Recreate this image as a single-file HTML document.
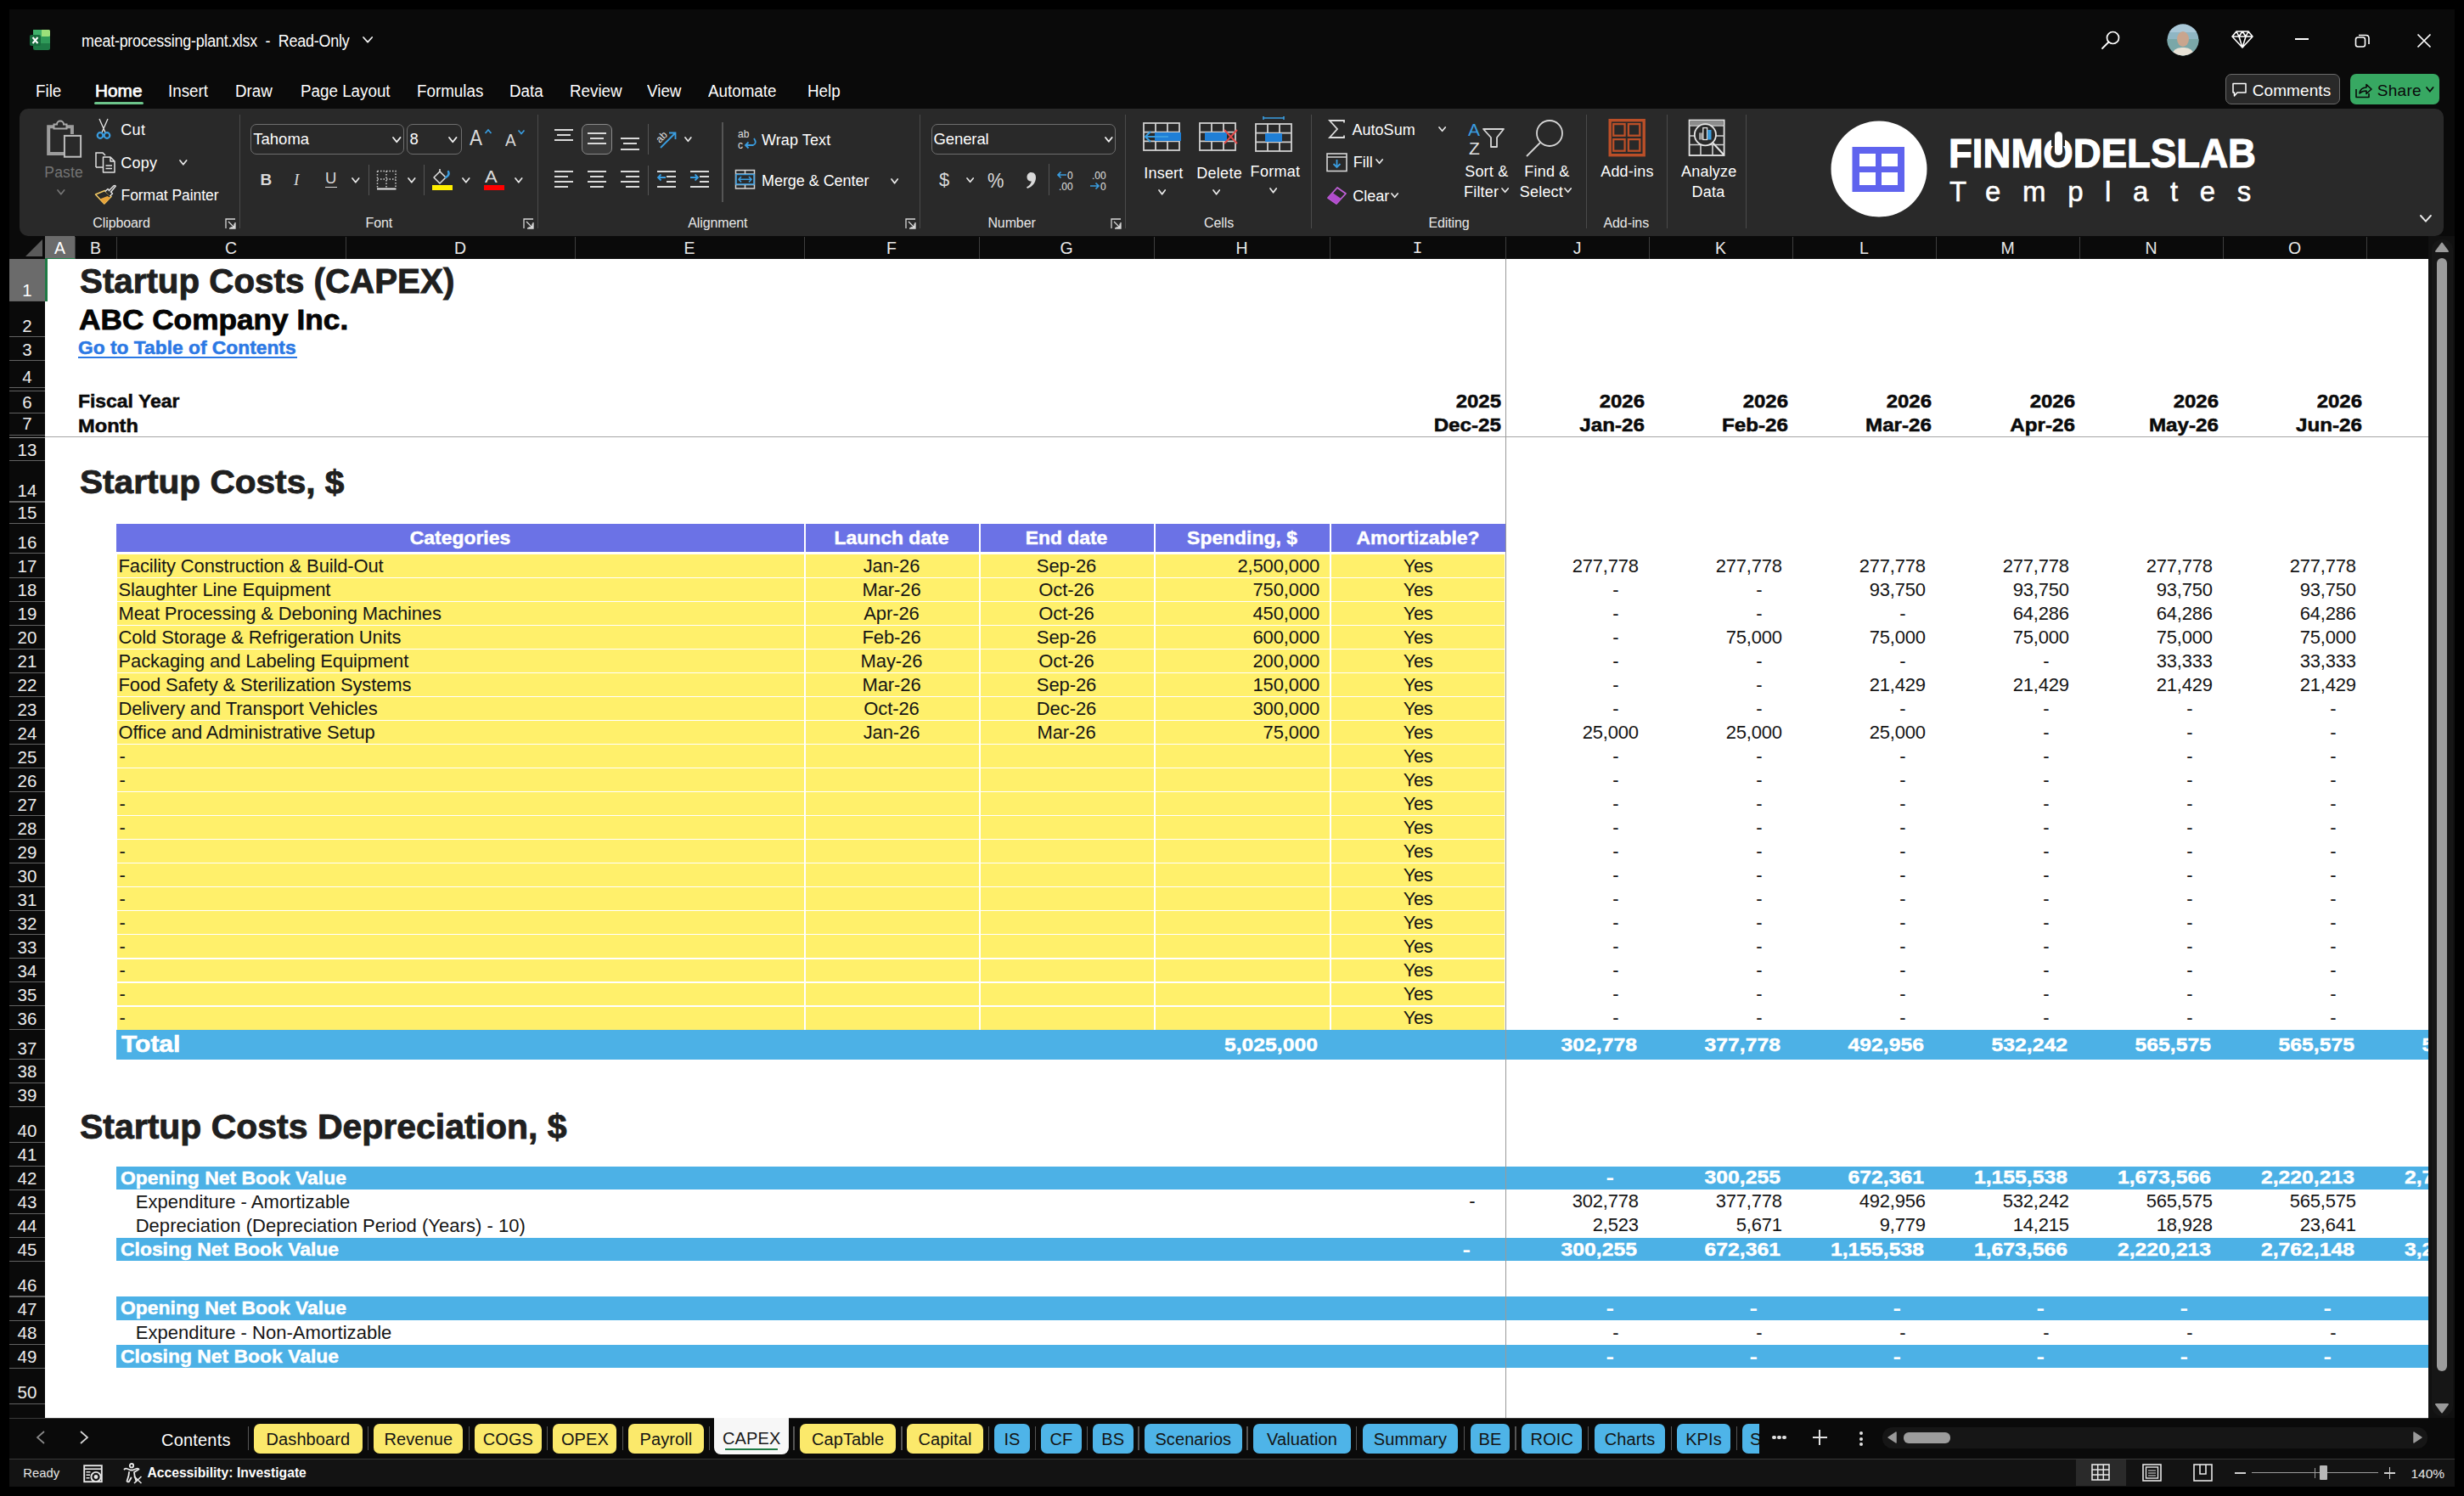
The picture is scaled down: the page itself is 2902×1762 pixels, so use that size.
<!DOCTYPE html>
<html><head><meta charset="utf-8"><style>
html,body{margin:0;padding:0}
body{width:2902px;height:1762px;background:#000;position:relative;overflow:hidden;font-family:"Liberation Sans", sans-serif}
.t{position:absolute;white-space:pre;line-height:1;font-family:"Liberation Sans", sans-serif}
.r{position:absolute}
</style></head><body>
<div class="r" style="left:11.0px;top:11.0px;width:2880.0px;height:1740.0px;background:#0a0a0a;"></div>
<svg class="r" style="left:34.0px;top:34.0px" width="26" height="26" viewBox="0 0 26 26" fill="none">
<rect x="5" y="1" width="20" height="24" rx="2.5" fill="#1e7a45"/>
<rect x="14" y="1" width="11" height="8" rx="1.5" fill="#9be07a"/>
<rect x="5" y="1" width="10" height="8" fill="#3fb06a"/>
<rect x="14" y="9" width="11" height="8" fill="#2f9a58"/>
<rect x="1" y="7" width="13" height="13" rx="2" fill="#176b3c"/>
<path d="M4.5 10 L10.5 17 M10.5 10 L4.5 17" stroke="#fff" stroke-width="2"/>
</svg>
<div class="t" style="top:37.6px;font-size:20px;color:#ffffff;letter-spacing:-0.25px;left:95.5px;transform:scaleX(0.895);transform-origin:left top;">meat-processing-plant.xlsx  -  Read-Only</div>
<svg class="r" style="left:425.9px;top:42.1px" width="14.2" height="9.7" viewBox="0 0 14.2 9.7" fill="none"><path d="M2 2 L7.1 7.699999999999999 L12.2 2" stroke="#f0f0f0" stroke-width="1.7600000000000002" stroke-linecap="round" stroke-linejoin="round"/></svg>
<svg class="r" style="left:2474.0px;top:35.0px" width="24" height="24" viewBox="0 0 24 24" fill="none"><circle cx="14.5" cy="9.5" r="7" stroke="#fff" stroke-width="1.7"/><path d="M9.5 14.5 L2 22" stroke="#fff" stroke-width="1.8" stroke-linecap="round"/></svg>
<svg class="r" style="left:2552.0px;top:28.0px" width="38" height="38" viewBox="0 0 38 38" fill="none">
<defs><clipPath id="av"><circle cx="19" cy="19" r="18.5"/></clipPath></defs>
<g clip-path="url(#av)">
<rect width="38" height="38" fill="#8fb6c4"/>
<rect y="0" width="38" height="10" fill="#aac8d8"/>
<rect y="18" width="38" height="20" fill="#7aa7a8"/>
<ellipse cx="19" cy="18" rx="7" ry="9" fill="#c9a58e"/>
<path d="M5 38 Q8 27 19 28 Q30 27 33 38 Z" fill="#e8e2d6"/>
</g></svg>
<svg class="r" style="left:2627.0px;top:33.0px" width="28" height="26" viewBox="0 0 28 26" fill="none"><path d="M7 4 H21 L26 10 L14 23 L2 10 Z M2 10 H26 M10 10 L14 23 L18 10 M7 4 L10 10 L14 4 L18 10 L21 4" stroke="#fff" stroke-width="1.6" stroke-linejoin="round"/></svg>
<div class="r" style="left:2703.0px;top:45.0px;width:16.0px;height:2.0px;background:#ffffff;"></div>
<svg class="r" style="left:2773.0px;top:39.0px" width="20" height="18" viewBox="0 0 20 18" fill="none"><rect x="1.5" y="5" width="11" height="11" rx="2.5" stroke="#fff" stroke-width="1.6"/><path d="M5 2.5 H13.5 Q17 2.5 17 6 V13" stroke="#fff" stroke-width="1.6"/></svg>
<svg class="r" style="left:2846.0px;top:39.0px" width="18" height="18" viewBox="0 0 18 18" fill="none"><path d="M1.5 1.5 L16.5 16.5 M16.5 1.5 L1.5 16.5" stroke="#fff" stroke-width="1.7"/></svg>
<div class="t" style="top:96.7px;font-size:20px;color:#ffffff;left:42.2px;transform:scaleX(0.94);transform-origin:left top;">File</div>
<div class="t" style="top:96.7px;font-size:20px;color:#ffffff;left:197.8px;transform:scaleX(0.94);transform-origin:left top;">Insert</div>
<div class="t" style="top:96.7px;font-size:20px;color:#ffffff;left:277.0px;transform:scaleX(0.94);transform-origin:left top;">Draw</div>
<div class="t" style="top:96.7px;font-size:20px;color:#ffffff;left:353.5px;transform:scaleX(0.94);transform-origin:left top;">Page Layout</div>
<div class="t" style="top:96.7px;font-size:20px;color:#ffffff;left:491.0px;transform:scaleX(0.94);transform-origin:left top;">Formulas</div>
<div class="t" style="top:96.7px;font-size:20px;color:#ffffff;left:600.0px;transform:scaleX(0.94);transform-origin:left top;">Data</div>
<div class="t" style="top:96.7px;font-size:20px;color:#ffffff;left:670.5px;transform:scaleX(0.94);transform-origin:left top;">Review</div>
<div class="t" style="top:96.7px;font-size:20px;color:#ffffff;left:761.8px;transform:scaleX(0.94);transform-origin:left top;">View</div>
<div class="t" style="top:96.7px;font-size:20px;color:#ffffff;left:834.0px;transform:scaleX(0.94);transform-origin:left top;">Automate</div>
<div class="t" style="top:96.7px;font-size:20px;color:#ffffff;left:951.0px;transform:scaleX(0.94);transform-origin:left top;">Help</div>
<div class="t" style="top:96.7px;font-size:20px;color:#ffffff;left:111.6px;transform:scaleX(1.04);transform-origin:left top;-webkit-text-stroke:0.7px #fff;">Home</div>
<div class="r" style="left:111.0px;top:120.0px;width:58.0px;height:3.0px;background:#6cc48a;border-radius:2px"></div>
<div class="r" style="left:2621.0px;top:87.0px;width:135.0px;height:36.0px;background:#292929;border:1.3px solid #6a6a6a;border-radius:7px;box-sizing:border-box"></div>
<svg class="r" style="left:2628.0px;top:96.0px" width="20" height="20" viewBox="0 0 20 20" fill="none"><path d="M2 2.5 H17 V13 H7 L3.5 17 V13 H2 Z" stroke="#fff" stroke-width="1.5" stroke-linejoin="round"/></svg>
<div class="t" style="top:96.6px;font-size:19px;color:#ffffff;letter-spacing:0.1px;left:2652.7px;">Comments</div>
<div class="r" style="left:2768.0px;top:87.0px;width:105.0px;height:36.0px;background:#37a862;border-radius:7px"></div>
<svg class="r" style="left:2773.0px;top:97.0px" width="22" height="20" viewBox="0 0 22 20" fill="none"><path d="M2 8 V17.5 H17 V13" stroke="#0b0b0b" stroke-width="1.6" stroke-linejoin="round"/><path d="M6 13 Q7 6 14 6 V2.5 L20 8 L14 13.5 V10 Q9 10 6 13 Z" stroke="#0b0b0b" stroke-width="1.6" stroke-linejoin="round"/></svg>
<div class="t" style="top:96.6px;font-size:19px;color:#0a0a0a;letter-spacing:0.3px;left:2799.7px;">Share</div>
<svg class="r" style="left:2856.2px;top:100.6px" width="11.649999999999999" height="8.75" viewBox="0 0 11.649999999999999 8.75" fill="none"><path d="M2 2 L5.824999999999999 6.75 L9.649999999999999 2" stroke="#0a0a0a" stroke-width="1.7600000000000002" stroke-linecap="round" stroke-linejoin="round"/></svg>
<div class="r" style="left:23.0px;top:128.0px;width:2855.0px;height:150.0px;background:#292929;border-radius:10px"></div>
<div class="r" style="left:281.9px;top:135.0px;width:1.2px;height:134.0px;background:#4a4a4a;"></div>
<div class="r" style="left:632.9px;top:135.0px;width:1.2px;height:134.0px;background:#4a4a4a;"></div>
<div class="r" style="left:1082.9px;top:135.0px;width:1.2px;height:134.0px;background:#4a4a4a;"></div>
<div class="r" style="left:1324.9px;top:135.0px;width:1.2px;height:134.0px;background:#4a4a4a;"></div>
<div class="r" style="left:1543.9px;top:135.0px;width:1.2px;height:134.0px;background:#4a4a4a;"></div>
<div class="r" style="left:1867.7px;top:135.0px;width:1.2px;height:134.0px;background:#4a4a4a;"></div>
<div class="r" style="left:1962.8px;top:135.0px;width:1.2px;height:134.0px;background:#4a4a4a;"></div>
<div class="r" style="left:2055.9px;top:135.0px;width:1.2px;height:134.0px;background:#4a4a4a;"></div>
<div class="t" style="top:254.5px;font-size:16px;color:#e8e8e8;letter-spacing:-0.1px;left:109.3px;">Clipboard</div>
<div class="t" style="top:254.5px;font-size:16px;color:#e8e8e8;letter-spacing:-0.1px;left:430.5px;">Font</div>
<div class="t" style="top:254.5px;font-size:16px;color:#e8e8e8;letter-spacing:-0.1px;left:810.2px;">Alignment</div>
<div class="t" style="top:254.5px;font-size:16px;color:#e8e8e8;letter-spacing:-0.1px;left:1163.4px;">Number</div>
<div class="t" style="top:254.5px;font-size:16px;color:#e8e8e8;letter-spacing:-0.1px;left:1418.0px;">Cells</div>
<div class="t" style="top:254.5px;font-size:16px;color:#e8e8e8;letter-spacing:-0.1px;left:1682.4px;">Editing</div>
<div class="t" style="top:254.5px;font-size:16px;color:#e8e8e8;letter-spacing:-0.1px;left:1888.5px;">Add-ins</div>
<svg class="r" style="left:265.0px;top:257.0px" width="13" height="13" viewBox="0 0 13 13" fill="none"><path d="M1 12 V1 H12 M12 5 V12 H5 M4 4 L11 11 M11 6.5 V11 H6.5" stroke="#d8d8d8" stroke-width="1.3"/></svg>
<svg class="r" style="left:616.0px;top:257.0px" width="13" height="13" viewBox="0 0 13 13" fill="none"><path d="M1 12 V1 H12 M12 5 V12 H5 M4 4 L11 11 M11 6.5 V11 H6.5" stroke="#d8d8d8" stroke-width="1.3"/></svg>
<svg class="r" style="left:1066.0px;top:257.0px" width="13" height="13" viewBox="0 0 13 13" fill="none"><path d="M1 12 V1 H12 M12 5 V12 H5 M4 4 L11 11 M11 6.5 V11 H6.5" stroke="#d8d8d8" stroke-width="1.3"/></svg>
<svg class="r" style="left:1308.0px;top:257.0px" width="13" height="13" viewBox="0 0 13 13" fill="none"><path d="M1 12 V1 H12 M12 5 V12 H5 M4 4 L11 11 M11 6.5 V11 H6.5" stroke="#d8d8d8" stroke-width="1.3"/></svg>
<svg class="r" style="left:54.0px;top:140.0px" width="44" height="48" viewBox="0 0 44 48" fill="none">
<path d="M21 40.9 H3.2 V9.2 H9.5 M24.5 9.2 H30.9 V18" stroke="#9c9c9c" stroke-width="4"/>
<path d="M9.5 11.5 V6.5 H13 A4 4 0 0 1 21 6.5 H24.5 V11.5 Z" stroke="#a8a8a8" stroke-width="2" fill="#292929"/>
<rect x="21.9" y="19.9" width="19.2" height="24.8" stroke="#bdbdbd" stroke-width="2"/></svg>
<div class="t" style="top:195.2px;font-size:17.5px;color:#747474;letter-spacing:0.2px;left:52.3px;">Paste</div>
<svg class="r" style="left:65.7px;top:222.1px" width="11.649999999999999" height="8.75" viewBox="0 0 11.649999999999999 8.75" fill="none"><path d="M2 2 L5.824999999999999 6.75 L9.649999999999999 2" stroke="#747474" stroke-width="1.7600000000000002" stroke-linecap="round" stroke-linejoin="round"/></svg>
<svg class="r" style="left:110.0px;top:139.0px" width="24" height="26" viewBox="0 0 24 26" fill="none">
<path d="M7 1 L14 17 M17 1 L10 17" stroke="#e6e6e6" stroke-width="1.3"/>
<circle cx="8" cy="20.5" r="3.3" stroke="#3a9de0" stroke-width="2.2"/>
<circle cx="16" cy="20.5" r="3.3" stroke="#3a9de0" stroke-width="2.2"/></svg>
<div class="t" style="top:143.8px;font-size:18px;color:#ffffff;letter-spacing:0.4px;left:142.2px;">Cut</div>
<svg class="r" style="left:111.0px;top:178.0px" width="26" height="27" viewBox="0 0 26 27" fill="none">
<path d="M2 19 V2 H10 L13 5" stroke="#e0e0e0" stroke-width="1.5"/>
<path d="M2 19 H10" stroke="#e0e0e0" stroke-width="1.5"/>
<path d="M10.5 7 H19 L24 12 V25 H10.5 Z M19 7 V12 H24" stroke="#e0e0e0" stroke-width="1.5" stroke-linejoin="round"/>
<path d="M13.5 17 H21 M13.5 20.5 H21" stroke="#e0e0e0" stroke-width="1.4"/></svg>
<div class="t" style="top:182.8px;font-size:18px;color:#ffffff;letter-spacing:0.3px;left:142.2px;">Copy</div>
<svg class="r" style="left:209.7px;top:187.1px" width="11.649999999999999" height="8.75" viewBox="0 0 11.649999999999999 8.75" fill="none"><path d="M2 2 L5.824999999999999 6.75 L9.649999999999999 2" stroke="#e6e6e6" stroke-width="1.7600000000000002" stroke-linecap="round" stroke-linejoin="round"/></svg>
<svg class="r" style="left:111.0px;top:216.0px" width="26" height="26" viewBox="0 0 26 26" fill="none">
<path d="M1.5 13 L12.4 8.6 L20 15.5 L11.8 24 Z" fill="#292929" stroke="#f2c863" stroke-width="1.6" stroke-linejoin="round"/>
<path d="M6.5 18.5 L15.5 15 L19 17 L11.8 24 Z" fill="#e8a33a"/>
<path d="M12.8 9.5 L16 6.5 L21.5 12 L18.5 15" stroke="#e0e0e0" stroke-width="1.5" fill="#292929" stroke-linejoin="round"/>
<path d="M17 9 L23 2.8 Q24.5 1.8 25.2 3.2 L19.3 10.5" stroke="#e0e0e0" stroke-width="1.5" fill="#292929" stroke-linejoin="round"/></svg>
<div class="t" style="top:222.0px;font-size:17.5px;color:#ffffff;letter-spacing:-0.05px;left:142.5px;">Format Painter</div>
<div class="r" style="left:295.0px;top:146.0px;width:181.0px;height:36.0px;background:transparent;border:1.3px solid #6f6f6f;border-radius:7px;box-sizing:border-box"></div>
<div class="t" style="top:155.3px;font-size:18.5px;color:#ffffff;left:298.3px;">Tahoma</div>
<svg class="r" style="left:460.8px;top:159.9px" width="12.5" height="9.225" viewBox="0 0 12.5 9.225" fill="none"><path d="M2 2 L6.25 7.225 L10.5 2" stroke="#f0f0f0" stroke-width="1.87" stroke-linecap="round" stroke-linejoin="round"/></svg>
<div class="r" style="left:479.0px;top:146.0px;width:65.0px;height:36.0px;background:transparent;border:1.3px solid #6f6f6f;border-radius:7px;box-sizing:border-box"></div>
<div class="t" style="top:155.3px;font-size:18.5px;color:#ffffff;left:482.4px;">8</div>
<svg class="r" style="left:526.8px;top:159.9px" width="12.5" height="9.225" viewBox="0 0 12.5 9.225" fill="none"><path d="M2 2 L6.25 7.225 L10.5 2" stroke="#f0f0f0" stroke-width="1.87" stroke-linecap="round" stroke-linejoin="round"/></svg>
<div class="t" style="top:150.3px;font-size:25px;color:#d9d9d9;left:553.0px;transform:scaleX(0.9);transform-origin:left top;">A</div>
<svg class="r" style="left:570.0px;top:151.0px" width="10" height="7" viewBox="0 0 10 7" fill="none"><path d="M1.5 6 L5 2 L8.5 6" stroke="#3a9de0" stroke-width="1.7"/></svg>
<div class="t" style="top:154.6px;font-size:20px;color:#d9d9d9;left:595.0px;transform:scaleX(0.95);transform-origin:left top;">A</div>
<svg class="r" style="left:609.0px;top:152.0px" width="10" height="7" viewBox="0 0 10 7" fill="none"><path d="M1.5 1.5 L5 5.5 L8.5 1.5" stroke="#3a9de0" stroke-width="1.7"/></svg>
<div class="t" style="top:201.9px;font-size:19px;color:#d9d9d9;font-weight:700;left:306.5px;">B</div>
<div class="t" style="top:201.9px;font-size:19px;color:#d9d9d9;left:346.0px;font-style:italic;font-family:'Liberation Serif',serif;">I</div>
<div class="t" style="top:201.3px;font-size:18.5px;color:#d9d9d9;left:383.0px;">U</div>
<div class="r" style="left:383.0px;top:219.5px;width:14.0px;height:1.5px;background:#d9d9d9;"></div>
<svg class="r" style="left:413.2px;top:207.6px" width="11.649999999999999" height="8.75" viewBox="0 0 11.649999999999999 8.75" fill="none"><path d="M2 2 L5.824999999999999 6.75 L9.649999999999999 2" stroke="#e6e6e6" stroke-width="1.7600000000000002" stroke-linecap="round" stroke-linejoin="round"/></svg>
<div class="r" style="left:433.8px;top:194.0px;width:1.2px;height:35.5px;background:#555;"></div>
<svg class="r" style="left:442.0px;top:199.0px" width="27" height="26" viewBox="0 0 27 26" fill="none"><path d="M2.5 2.5 H24 V22 M2.5 2.5 V22 M13 2.5 V22 M2.5 12 H24" stroke="#cfcfcf" stroke-width="1.5" stroke-dasharray="1.5 2"/><path d="M2 23.5 H24.5" stroke="#e6e6e6" stroke-width="2"/></svg>
<svg class="r" style="left:478.7px;top:207.6px" width="11.649999999999999" height="8.75" viewBox="0 0 11.649999999999999 8.75" fill="none"><path d="M2 2 L5.824999999999999 6.75 L9.649999999999999 2" stroke="#e6e6e6" stroke-width="1.7600000000000002" stroke-linecap="round" stroke-linejoin="round"/></svg>
<div class="r" style="left:499.0px;top:194.0px;width:1.2px;height:35.5px;background:#555;"></div>
<svg class="r" style="left:507.0px;top:198.0px" width="28" height="20" viewBox="0 0 28 20" fill="none"><path d="M4 11 L11 4 L18 11 L11 18 Z" stroke="#e0e0e0" stroke-width="1.5" stroke-linejoin="round"/><path d="M11 4 V1" stroke="#e0e0e0" stroke-width="1.5"/><path d="M18 11 Q23 8 21 4" stroke="#3a9de0" stroke-width="2.5" stroke-linecap="round"/></svg>
<div class="r" style="left:508.7px;top:217.8px;width:24.8px;height:6.2px;background:#ffef00;"></div>
<svg class="r" style="left:543.2px;top:207.6px" width="11.649999999999999" height="8.75" viewBox="0 0 11.649999999999999 8.75" fill="none"><path d="M2 2 L5.824999999999999 6.75 L9.649999999999999 2" stroke="#e6e6e6" stroke-width="1.7600000000000002" stroke-linecap="round" stroke-linejoin="round"/></svg>
<div class="t" style="top:197.2px;font-size:21px;color:#d9d9d9;left:570.5px;transform:scaleX(1.05);transform-origin:left top;">A</div>
<div class="r" style="left:570.0px;top:217.8px;width:24.0px;height:6.2px;background:#ff0000;"></div>
<svg class="r" style="left:604.7px;top:207.6px" width="11.649999999999999" height="8.75" viewBox="0 0 11.649999999999999 8.75" fill="none"><path d="M2 2 L5.824999999999999 6.75 L9.649999999999999 2" stroke="#e6e6e6" stroke-width="1.7600000000000002" stroke-linecap="round" stroke-linejoin="round"/></svg>
<div class="r" style="left:653.0px;top:151.7px;width:22.0px;height:2.0px;background:#d9d9d9;"></div>
<div class="r" style="left:656.0px;top:158.0px;width:16.0px;height:2.0px;background:#d9d9d9;"></div>
<div class="r" style="left:653.0px;top:164.0px;width:22.0px;height:2.0px;background:#d9d9d9;"></div>
<div class="r" style="left:685.0px;top:146.0px;width:36.0px;height:36.0px;background:#3a3a3a;border:1.3px solid #8a8a8a;border-radius:7px;box-sizing:border-box"></div>
<div class="r" style="left:692.0px;top:156.0px;width:22.0px;height:2.0px;background:#d9d9d9;"></div>
<div class="r" style="left:695.0px;top:162.0px;width:16.0px;height:2.0px;background:#d9d9d9;"></div>
<div class="r" style="left:692.0px;top:168.0px;width:22.0px;height:2.0px;background:#d9d9d9;"></div>
<div class="r" style="left:731.0px;top:162.0px;width:22.0px;height:2.0px;background:#d9d9d9;"></div>
<div class="r" style="left:734.0px;top:168.2px;width:16.0px;height:2.0px;background:#d9d9d9;"></div>
<div class="r" style="left:731.0px;top:174.5px;width:22.0px;height:2.0px;background:#d9d9d9;"></div>
<div class="r" style="left:763.0px;top:146.0px;width:1.2px;height:36.0px;background:#555;"></div>
<svg class="r" style="left:771.0px;top:150.0px" width="30" height="27" viewBox="0 0 30 27" fill="none"><text x="2" y="15" transform="rotate(-45 9 12)" font-family="Liberation Sans" font-size="12" fill="#e0e0e0">ab</text><path d="M7 24 L24 7 M17 6.5 H24.5 V14" stroke="#3a9de0" stroke-width="1.8"/></svg>
<svg class="r" style="left:804.6px;top:159.9px" width="10.8" height="8.274999999999999" viewBox="0 0 10.8 8.274999999999999" fill="none"><path d="M2 2 L5.4 6.2749999999999995 L8.8 2" stroke="#e6e6e6" stroke-width="1.7600000000000002" stroke-linecap="round" stroke-linejoin="round"/></svg>
<div class="r" style="left:653.0px;top:201.2px;width:22.0px;height:2.0px;background:#d9d9d9;"></div>
<div class="r" style="left:653.0px;top:207.0px;width:16.0px;height:2.0px;background:#d9d9d9;"></div>
<div class="r" style="left:653.0px;top:212.7px;width:22.0px;height:2.0px;background:#d9d9d9;"></div>
<div class="r" style="left:653.0px;top:219.0px;width:16.0px;height:2.0px;background:#d9d9d9;"></div>
<div class="r" style="left:692.0px;top:201.2px;width:22.0px;height:2.0px;background:#d9d9d9;"></div>
<div class="r" style="left:695.0px;top:207.0px;width:16.0px;height:2.0px;background:#d9d9d9;"></div>
<div class="r" style="left:692.0px;top:212.7px;width:22.0px;height:2.0px;background:#d9d9d9;"></div>
<div class="r" style="left:695.0px;top:219.0px;width:16.0px;height:2.0px;background:#d9d9d9;"></div>
<div class="r" style="left:731.0px;top:201.2px;width:22.0px;height:2.0px;background:#d9d9d9;"></div>
<div class="r" style="left:737.0px;top:207.0px;width:16.0px;height:2.0px;background:#d9d9d9;"></div>
<div class="r" style="left:731.0px;top:212.7px;width:22.0px;height:2.0px;background:#d9d9d9;"></div>
<div class="r" style="left:737.0px;top:219.0px;width:16.0px;height:2.0px;background:#d9d9d9;"></div>
<div class="r" style="left:763.0px;top:194.6px;width:1.2px;height:35.4px;background:#555;"></div>
<div class="r" style="left:774.0px;top:201.2px;width:22.0px;height:2.0px;background:#d9d9d9;"></div>
<div class="r" style="left:774.0px;top:219.0px;width:22.0px;height:2.0px;background:#d9d9d9;"></div>
<div class="r" style="left:785.0px;top:207.0px;width:11.0px;height:2.0px;background:#d9d9d9;"></div>
<div class="r" style="left:785.0px;top:212.7px;width:11.0px;height:2.0px;background:#d9d9d9;"></div>
<svg class="r" style="left:773.0px;top:204.0px" width="12" height="10" viewBox="0 0 12 10" fill="none"><path d="M11 5 H2 M5.5 1.5 L2 5 L5.5 8.5" stroke="#3a9de0" stroke-width="1.8"/></svg>
<div class="r" style="left:813.0px;top:201.2px;width:22.0px;height:2.0px;background:#d9d9d9;"></div>
<div class="r" style="left:813.0px;top:219.0px;width:22.0px;height:2.0px;background:#d9d9d9;"></div>
<div class="r" style="left:824.0px;top:207.0px;width:11.0px;height:2.0px;background:#d9d9d9;"></div>
<div class="r" style="left:824.0px;top:212.7px;width:11.0px;height:2.0px;background:#d9d9d9;"></div>
<svg class="r" style="left:812.0px;top:204.0px" width="12" height="10" viewBox="0 0 12 10" fill="none"><path d="M1 5 H10 M6.5 1.5 L10 5 L6.5 8.5" stroke="#3a9de0" stroke-width="1.8"/></svg>
<div class="r" style="left:850.4px;top:144.0px;width:1.2px;height:93.5px;background:#555;"></div>
<svg class="r" style="left:868.0px;top:151.0px" width="26" height="27" viewBox="0 0 26 27" fill="none"><text x="1" y="11" font-family="Liberation Sans" font-size="12" fill="#e0e0e0">ab</text><text x="1" y="24" font-family="Liberation Sans" font-size="12" fill="#e0e0e0">c</text><path d="M20 12 Q24 18 19 20 H10 M13.5 16.5 L10 20 L13.5 23.5" stroke="#3a9de0" stroke-width="1.8"/></svg>
<div class="t" style="top:156.0px;font-size:18px;color:#ffffff;letter-spacing:0.1px;left:897.0px;">Wrap Text</div>
<svg class="r" style="left:865.0px;top:199.0px" width="26" height="25" viewBox="0 0 26 25" fill="none"><rect x="1.5" y="1.5" width="22" height="21.5" stroke="#d6d6d6" stroke-width="1.5"/><path d="M1.5 6 H23.5 M1.5 18.5 H23.5 M12.5 1.5 V6 M12.5 18.5 V23" stroke="#d6d6d6" stroke-width="1.5"/><rect x="2" y="6.5" width="21" height="11.5" stroke="#3a9de0" stroke-width="1.5"/><path d="M5 12.25 H20 M8 9 L5 12.25 L8 15.5 M17 9 L20 12.25 L17 15.5" stroke="#3a9de0" stroke-width="1.6"/></svg>
<div class="t" style="top:204.2px;font-size:18px;color:#ffffff;letter-spacing:-0.05px;left:897.0px;">Merge &amp; Center</div>
<svg class="r" style="left:1048.4px;top:208.6px" width="11.225" height="8.75" viewBox="0 0 11.225 8.75" fill="none"><path d="M2 2 L5.6125 6.75 L9.225 2" stroke="#e6e6e6" stroke-width="1.7600000000000002" stroke-linecap="round" stroke-linejoin="round"/></svg>
<div class="r" style="left:1096.5px;top:146.0px;width:217.5px;height:36.0px;background:transparent;border:1.3px solid #6f6f6f;border-radius:7px;box-sizing:border-box"></div>
<div class="t" style="top:155.1px;font-size:18.5px;color:#ffffff;letter-spacing:-0.1px;left:1099.5px;">General</div>
<svg class="r" style="left:1299.7px;top:160.1px" width="11.649999999999999" height="8.75" viewBox="0 0 11.649999999999999 8.75" fill="none"><path d="M2 2 L5.824999999999999 6.75 L9.649999999999999 2" stroke="#f0f0f0" stroke-width="1.87" stroke-linecap="round" stroke-linejoin="round"/></svg>
<div class="t" style="top:201.4px;font-size:22px;color:#d9d9d9;left:1106.0px;">$</div>
<svg class="r" style="left:1136.9px;top:208.4px" width="11.225" height="8.274999999999999" viewBox="0 0 11.225 8.274999999999999" fill="none"><path d="M2 2 L5.6125 6.2749999999999995 L9.225 2" stroke="#e6e6e6" stroke-width="1.7600000000000002" stroke-linecap="round" stroke-linejoin="round"/></svg>
<div class="t" style="top:201.5px;font-size:23px;color:#d9d9d9;left:1163.0px;transform:scaleX(0.95);transform-origin:left top;">%</div>
<svg class="r" style="left:1206.0px;top:201.0px" width="16" height="23" viewBox="0 0 16 23" fill="none"><path d="M8.5 2 C12.5 2 14 5 14 8 C14 14 10 19 4 21 L3 19.5 C6.5 17.5 8.5 15 8.8 12.5 C5.5 12.5 3.5 10.5 3.5 7.5 C3.5 4.5 5.5 2 8.5 2 Z" fill="#d9d9d9"/></svg>
<div class="r" style="left:1235.0px;top:193.0px;width:1.2px;height:37.0px;background:#555;"></div>
<svg class="r" style="left:1243.0px;top:199.0px" width="27" height="27" viewBox="0 0 27 27" fill="none"><path d="M13 7 H3 M6.5 3.5 L3 7 L6.5 10.5" stroke="#3a9de0" stroke-width="1.7"/><text x="14" y="12" font-family="Liberation Sans" font-size="12" fill="#e0e0e0">0</text><text x="4" y="25" font-family="Liberation Sans" font-size="12" fill="#e0e0e0">.00</text></svg>
<svg class="r" style="left:1282.0px;top:199.0px" width="27" height="27" viewBox="0 0 27 27" fill="none"><text x="4" y="12" font-family="Liberation Sans" font-size="12" fill="#e0e0e0">.00</text><path d="M2 20 H12 M8.5 16.5 L12 20 L8.5 23.5" stroke="#3a9de0" stroke-width="1.7"/><text x="14" y="25" font-family="Liberation Sans" font-size="12" fill="#e0e0e0">0</text></svg>
<svg class="r" style="left:1346.0px;top:144.0px" width="47" height="35" viewBox="0 0 47 35" fill="none"><rect x="1" y="1" width="42" height="32" stroke="#d0d0d0" stroke-width="1.8"/><path d="M15.0 1 V33" stroke="#d0d0d0" stroke-width="1.8"/><path d="M29.0 1 V33" stroke="#d0d0d0" stroke-width="1.8"/><path d="M1 11.7 H43" stroke="#d0d0d0" stroke-width="1.8"/><path d="M1 22.3 H43" stroke="#d0d0d0" stroke-width="1.8"/><rect x="14" y="12" width="31" height="10" fill="#1f7fd6"/><path d="M30 17 H3 M9 11 L3 17 L9 23" stroke="#3a9de0" stroke-width="2"/></svg>
<div class="t" style="top:194.8px;font-size:18px;color:#ffffff;letter-spacing:0.2px;left:1347.3px;">Insert</div>
<svg class="r" style="left:1362.7px;top:222.1px" width="11.225" height="8.75" viewBox="0 0 11.225 8.75" fill="none"><path d="M2 2 L5.6125 6.75 L9.225 2" stroke="#e6e6e6" stroke-width="1.7600000000000002" stroke-linecap="round" stroke-linejoin="round"/></svg>
<svg class="r" style="left:1412.0px;top:144.0px" width="47" height="35" viewBox="0 0 47 35" fill="none"><rect x="1" y="1" width="42" height="32" stroke="#d0d0d0" stroke-width="1.8"/><path d="M15.0 1 V33" stroke="#d0d0d0" stroke-width="1.8"/><path d="M29.0 1 V33" stroke="#d0d0d0" stroke-width="1.8"/><path d="M1 11.7 H43" stroke="#d0d0d0" stroke-width="1.8"/><path d="M1 22.3 H43" stroke="#d0d0d0" stroke-width="1.8"/><rect x="7" y="12" width="26" height="10" fill="#1f7fd6"/><path d="M30 9 L45 25 M45 9 L30 25" stroke="#e04a4a" stroke-width="2"/></svg>
<div class="t" style="top:194.8px;font-size:18px;color:#ffffff;letter-spacing:0.3px;left:1409.2px;">Delete</div>
<svg class="r" style="left:1427.4px;top:222.1px" width="11.225" height="8.75" viewBox="0 0 11.225 8.75" fill="none"><path d="M2 2 L5.6125 6.75 L9.225 2" stroke="#e6e6e6" stroke-width="1.7600000000000002" stroke-linecap="round" stroke-linejoin="round"/></svg>
<svg class="r" style="left:1478.0px;top:137.0px" width="45" height="43" viewBox="0 0 45 43" fill="none"><path d="M10 2 H34 M10 0 V4 M34 0 V4" stroke="#3a9de0" stroke-width="1.6"/><g transform="translate(0,8)"><rect x="1" y="1" width="42" height="32" stroke="#d0d0d0" stroke-width="1.8"/><path d="M15.0 1 V33" stroke="#d0d0d0" stroke-width="1.8"/><path d="M29.0 1 V33" stroke="#d0d0d0" stroke-width="1.8"/><path d="M1 11.7 H43" stroke="#d0d0d0" stroke-width="1.8"/><path d="M1 22.3 H43" stroke="#d0d0d0" stroke-width="1.8"/><rect x="12" y="12" width="20" height="10" fill="#1f7fd6"/></g></svg>
<div class="t" style="top:192.6px;font-size:18px;color:#ffffff;letter-spacing:0.3px;left:1472.6px;">Format</div>
<svg class="r" style="left:1493.9px;top:220.1px" width="11.225" height="8.75" viewBox="0 0 11.225 8.75" fill="none"><path d="M2 2 L5.6125 6.75 L9.225 2" stroke="#e6e6e6" stroke-width="1.7600000000000002" stroke-linecap="round" stroke-linejoin="round"/></svg>
<svg class="r" style="left:1563.0px;top:140.0px" width="23" height="24" viewBox="0 0 23 24" fill="none"><path d="M20 4.5 V2 H3 L12 12 L3 22 H20 V19.5" stroke="#dcdcdc" stroke-width="1.8" stroke-linejoin="miter"/></svg>
<div class="t" style="top:143.8px;font-size:18px;color:#ffffff;left:1592.6px;">AutoSum</div>
<svg class="r" style="left:1693.4px;top:148.2px" width="11.225" height="8.274999999999999" viewBox="0 0 11.225 8.274999999999999" fill="none"><path d="M2 2 L5.6125 6.2749999999999995 L9.225 2" stroke="#e6e6e6" stroke-width="1.7600000000000002" stroke-linecap="round" stroke-linejoin="round"/></svg>
<svg class="r" style="left:1562.0px;top:180.0px" width="26" height="23" viewBox="0 0 26 23" fill="none"><rect x="1" y="1" width="23" height="20.5" stroke="#d6d6d6" stroke-width="1.6"/><path d="M1 5 H24" stroke="#d6d6d6" stroke-width="1.5"/><path d="M12.5 8 V17 M8.5 13 L12.5 17 L16.5 13" stroke="#3a9de0" stroke-width="1.8"/></svg>
<div class="t" style="top:182.1px;font-size:18px;color:#ffffff;left:1593.7px;">Fill</div>
<svg class="r" style="left:1618.9px;top:186.4px" width="11.225" height="8.274999999999999" viewBox="0 0 11.225 8.274999999999999" fill="none"><path d="M2 2 L5.6125 6.2749999999999995 L9.225 2" stroke="#e6e6e6" stroke-width="1.7600000000000002" stroke-linecap="round" stroke-linejoin="round"/></svg>
<svg class="r" style="left:1561.0px;top:216.0px" width="27" height="27" viewBox="0 0 27 27" fill="none"><path d="M3 17 L14 5 L24 12 L13 24 Z" fill="none" stroke="#c060d8" stroke-width="1.8" stroke-linejoin="round"/><path d="M3 17 L8.5 11 L18.5 18 L13 24 Z" fill="#b04ccc"/></svg>
<div class="t" style="top:221.6px;font-size:18px;color:#ffffff;left:1593.3px;">Clear</div>
<svg class="r" style="left:1636.9px;top:225.9px" width="11.225" height="8.274999999999999" viewBox="0 0 11.225 8.274999999999999" fill="none"><path d="M2 2 L5.6125 6.2749999999999995 L9.225 2" stroke="#e6e6e6" stroke-width="1.7600000000000002" stroke-linecap="round" stroke-linejoin="round"/></svg>
<svg class="r" style="left:1728.0px;top:141.0px" width="46" height="42" viewBox="0 0 46 42" fill="none"><text x="1" y="19" font-family="Liberation Sans" font-size="21" fill="#3a9de0">A</text><text x="2" y="41" font-family="Liberation Sans" font-size="21" fill="#e0e0e0">Z</text><path d="M19 11 H43 L35 21 V32 H28 V21 Z" stroke="#d6d6d6" stroke-width="1.8" stroke-linejoin="round"/></svg>
<div class="t" style="top:192.6px;font-size:18px;color:#ffffff;letter-spacing:0.2px;left:1725.2px;">Sort &amp;</div>
<div class="t" style="top:216.5px;font-size:18px;color:#ffffff;letter-spacing:0.2px;left:1724.0px;">Filter</div>
<svg class="r" style="left:1766.9px;top:220.4px" width="11.225" height="8.274999999999999" viewBox="0 0 11.225 8.274999999999999" fill="none"><path d="M2 2 L5.6125 6.2749999999999995 L9.225 2" stroke="#e6e6e6" stroke-width="1.7600000000000002" stroke-linecap="round" stroke-linejoin="round"/></svg>
<svg class="r" style="left:1796.0px;top:140.0px" width="48" height="46" viewBox="0 0 48 46" fill="none"><circle cx="29" cy="17" r="15" stroke="#d6d6d6" stroke-width="1.8"/><path d="M18 28 L2 44" stroke="#d6d6d6" stroke-width="1.8"/></svg>
<div class="t" style="top:192.6px;font-size:18px;color:#ffffff;letter-spacing:0.2px;left:1795.3px;">Find &amp;</div>
<div class="t" style="top:216.5px;font-size:18px;color:#ffffff;letter-spacing:0.2px;left:1789.8px;">Select</div>
<svg class="r" style="left:1840.9px;top:220.4px" width="11.225" height="8.274999999999999" viewBox="0 0 11.225 8.274999999999999" fill="none"><path d="M2 2 L5.6125 6.2749999999999995 L9.225 2" stroke="#e6e6e6" stroke-width="1.7600000000000002" stroke-linecap="round" stroke-linejoin="round"/></svg>
<svg class="r" style="left:1893.0px;top:139.0px" width="46" height="46" viewBox="0 0 46 46" fill="none"><rect x="3.2" y="2.7" width="40" height="41" stroke="#bb4f28" stroke-width="3.4"/><rect x="7.2" y="7.1" width="13.4" height="13.6" stroke="#bb4f28" stroke-width="2.3"/><rect x="7.2" y="25.1" width="13.4" height="13.6" stroke="#bb4f28" stroke-width="2.3"/><rect x="24.9" y="7.1" width="13.4" height="13.6" stroke="#bb4f28" stroke-width="2.3"/><rect x="24.9" y="25.1" width="13.4" height="13.6" stroke="#bb4f28" stroke-width="2.3"/></svg>
<div class="t" style="top:192.6px;font-size:18px;color:#ffffff;letter-spacing:0.2px;left:1885.2px;">Add-ins</div>
<svg class="r" style="left:1987.0px;top:139.0px" width="46" height="46" viewBox="0 0 46 46" fill="none"><rect x="2.6" y="2.6" width="41" height="41.4" stroke="#e6e6e6" stroke-width="1.8"/><rect x="3.5" y="3.5" width="39.2" height="4.5" fill="#8c8c8c"/><path d="M2 9 H44 M2 21 H44 M2 31.5 H44 M16 31.5 V44 M30 31.5 V44" stroke="#d0d0d0" stroke-width="1.6"/><circle cx="21.4" cy="19.7" r="12.6" fill="#292929" stroke="#e6e6e6" stroke-width="1.8"/><path d="M30 29 L43 43" stroke="#e6e6e6" stroke-width="2"/><rect x="14" y="17.4" width="4" height="8.1" fill="#9a9a9a"/><rect x="18.8" y="11.6" width="4.8" height="13.9" fill="#1e1e1e" stroke="#e6e6e6" stroke-width="1.3"/><rect x="24.3" y="14" width="4.2" height="11.5" fill="#3a9de0"/></svg>
<div class="t" style="top:192.6px;font-size:18px;color:#ffffff;letter-spacing:0.2px;left:1980.0px;">Analyze</div>
<div class="t" style="top:216.5px;font-size:18px;color:#ffffff;letter-spacing:0.2px;left:1992.6px;">Data</div>
<svg class="r" style="left:2156.0px;top:142.0px" width="114" height="114" viewBox="0 0 114 114" fill="none"><circle cx="57" cy="57" r="56.5" fill="#ffffff"/><rect x="25.5" y="31" width="61.5" height="53" fill="#5f63ee"/><rect x="34" y="39" width="19" height="15" fill="#fff"/><rect x="60" y="39" width="19" height="15" fill="#fff"/><rect x="34" y="61" width="19" height="15" fill="#fff"/><rect x="60" y="61" width="19" height="15" fill="#fff"/></svg>
<div class="t" style="top:156.2px;font-size:49px;color:#ffffff;font-weight:700;left:2294.5px;transform:scaleX(0.93);transform-origin:left top;-webkit-text-stroke:1.2px #fff;">FINMODELSLAB</div>
<div class="t" style="top:208.9px;font-size:33px;color:#ffffff;letter-spacing:25.6px;left:2296.0px;-webkit-text-stroke:0.5px #fff;">Templates</div>
<svg class="r" style="left:2849.1px;top:251.7px" width="15.9" height="10.649999999999999" viewBox="0 0 15.9 10.649999999999999" fill="none"><path d="M2 2 L7.95 8.649999999999999 L13.9 2" stroke="#e6e6e6" stroke-width="1.9800000000000002" stroke-linecap="round" stroke-linejoin="round"/></svg>
<div class="r" style="left:2416.0px;top:158.0px;width:16.0px;height:14.0px;background:#292929;"></div>
<div class="r" style="left:2419.5px;top:154.5px;width:9.0px;height:28.5px;background:#ffffff;border-radius:4.5px"></div>
<div class="r" style="left:11.0px;top:278.0px;width:2849.0px;height:27.0px;background:#0a0a0a;"></div>
<svg class="r" style="left:11.0px;top:278.0px" width="42" height="27" viewBox="0 0 42 27" fill="none"><path d="M39 4 V24 H19 Z" fill="#5a5a5a"/></svg>
<div class="r" style="left:53.0px;top:278.0px;width:35.0px;height:27.0px;background:#6b6b6b;"></div>
<div class="r" style="left:87.5px;top:279.0px;width:1.2px;height:26.0px;background:#3e3e3e;"></div>
<div class="t" style="top:282.8px;font-size:19.5px;color:#ffffff;left:-29.5px;width:200px;text-align:center;">A</div>
<div class="r" style="left:136.5px;top:279.0px;width:1.2px;height:26.0px;background:#3e3e3e;"></div>
<div class="t" style="top:282.8px;font-size:19.5px;color:#e8e8e8;left:12.5px;width:200px;text-align:center;">B</div>
<div class="r" style="left:406.5px;top:279.0px;width:1.2px;height:26.0px;background:#3e3e3e;"></div>
<div class="t" style="top:282.8px;font-size:19.5px;color:#e8e8e8;left:172.0px;width:200px;text-align:center;">C</div>
<div class="r" style="left:676.5px;top:279.0px;width:1.2px;height:26.0px;background:#3e3e3e;"></div>
<div class="t" style="top:282.8px;font-size:19.5px;color:#e8e8e8;left:442.0px;width:200px;text-align:center;">D</div>
<div class="r" style="left:946.5px;top:279.0px;width:1.2px;height:26.0px;background:#3e3e3e;"></div>
<div class="t" style="top:282.8px;font-size:19.5px;color:#e8e8e8;left:712.0px;width:200px;text-align:center;">E</div>
<div class="r" style="left:1152.5px;top:279.0px;width:1.2px;height:26.0px;background:#3e3e3e;"></div>
<div class="t" style="top:282.8px;font-size:19.5px;color:#e8e8e8;left:950.0px;width:200px;text-align:center;">F</div>
<div class="r" style="left:1358.5px;top:279.0px;width:1.2px;height:26.0px;background:#3e3e3e;"></div>
<div class="t" style="top:282.8px;font-size:19.5px;color:#e8e8e8;left:1156.0px;width:200px;text-align:center;">G</div>
<div class="r" style="left:1565.5px;top:279.0px;width:1.2px;height:26.0px;background:#3e3e3e;"></div>
<div class="t" style="top:282.8px;font-size:19.5px;color:#e8e8e8;left:1362.5px;width:200px;text-align:center;">H</div>
<div class="r" style="left:1772.5px;top:279.0px;width:1.2px;height:26.0px;background:#3e3e3e;"></div>
<div class="t" style="top:282.8px;font-size:19.5px;color:#e8e8e8;left:1569.5px;width:200px;text-align:center;font-family:'Liberation Mono',monospace;font-size:20px;">I</div>
<div class="r" style="left:1941.5px;top:279.0px;width:1.2px;height:26.0px;background:#3e3e3e;"></div>
<div class="t" style="top:282.8px;font-size:19.5px;color:#e8e8e8;left:1757.5px;width:200px;text-align:center;">J</div>
<div class="r" style="left:2110.5px;top:279.0px;width:1.2px;height:26.0px;background:#3e3e3e;"></div>
<div class="t" style="top:282.8px;font-size:19.5px;color:#e8e8e8;left:1926.5px;width:200px;text-align:center;">K</div>
<div class="r" style="left:2279.5px;top:279.0px;width:1.2px;height:26.0px;background:#3e3e3e;"></div>
<div class="t" style="top:282.8px;font-size:19.5px;color:#e8e8e8;left:2095.5px;width:200px;text-align:center;">L</div>
<div class="r" style="left:2448.5px;top:279.0px;width:1.2px;height:26.0px;background:#3e3e3e;"></div>
<div class="t" style="top:282.8px;font-size:19.5px;color:#e8e8e8;left:2264.5px;width:200px;text-align:center;">M</div>
<div class="r" style="left:2617.5px;top:279.0px;width:1.2px;height:26.0px;background:#3e3e3e;"></div>
<div class="t" style="top:282.8px;font-size:19.5px;color:#e8e8e8;left:2433.5px;width:200px;text-align:center;">N</div>
<div class="r" style="left:2786.5px;top:279.0px;width:1.2px;height:26.0px;background:#3e3e3e;"></div>
<div class="t" style="top:282.8px;font-size:19.5px;color:#e8e8e8;left:2602.5px;width:200px;text-align:center;">O</div>
<div class="t" style="top:282.8px;font-size:19.5px;color:#e8e8e8;left:2771.5px;width:200px;text-align:center;">P</div>
<div class="r" style="left:53.0px;top:304.0px;width:35.0px;height:2.0px;background:#1e7a45;"></div>
<div class="r" style="left:11.0px;top:305.0px;width:42.0px;height:1365.0px;background:#0a0a0a;"></div>
<div class="r" style="left:11.0px;top:305.0px;width:42.0px;height:49.5px;background:#6b6b6b;"></div>
<div class="r" style="left:11.0px;top:353.9px;width:42.0px;height:1.2px;background:#626262;"></div>
<div class="t" style="top:331.5px;font-size:20.5px;color:#ffffff;left:-18.0px;width:100px;text-align:center;">1</div>
<div class="r" style="left:11.0px;top:395.9px;width:42.0px;height:1.2px;background:#626262;"></div>
<div class="t" style="top:373.5px;font-size:20.5px;color:#ececec;left:-18.0px;width:100px;text-align:center;">2</div>
<div class="r" style="left:11.0px;top:423.9px;width:42.0px;height:1.2px;background:#626262;"></div>
<div class="t" style="top:401.5px;font-size:20.5px;color:#ececec;left:-18.0px;width:100px;text-align:center;">3</div>
<div class="r" style="left:11.0px;top:455.9px;width:42.0px;height:1.2px;background:#626262;"></div>
<div class="t" style="top:433.5px;font-size:20.5px;color:#ececec;left:-18.0px;width:100px;text-align:center;">4</div>
<div class="r" style="left:11.0px;top:485.9px;width:42.0px;height:1.2px;background:#626262;"></div>
<div class="t" style="top:463.5px;font-size:20.5px;color:#ececec;left:-18.0px;width:100px;text-align:center;">6</div>
<div class="r" style="left:11.0px;top:511.6px;width:42.0px;height:1.2px;background:#626262;"></div>
<div class="t" style="top:489.2px;font-size:20.5px;color:#ececec;left:-18.0px;width:100px;text-align:center;">7</div>
<div class="r" style="left:11.0px;top:541.9px;width:42.0px;height:1.2px;background:#626262;"></div>
<div class="t" style="top:519.5px;font-size:20.5px;color:#ececec;left:-18.0px;width:100px;text-align:center;">13</div>
<div class="r" style="left:11.0px;top:590.4px;width:42.0px;height:1.2px;background:#626262;"></div>
<div class="t" style="top:568.0px;font-size:20.5px;color:#ececec;left:-18.0px;width:100px;text-align:center;">14</div>
<div class="r" style="left:11.0px;top:615.9px;width:42.0px;height:1.2px;background:#626262;"></div>
<div class="t" style="top:593.5px;font-size:20.5px;color:#ececec;left:-18.0px;width:100px;text-align:center;">15</div>
<div class="r" style="left:11.0px;top:650.9px;width:42.0px;height:1.2px;background:#626262;"></div>
<div class="t" style="top:628.5px;font-size:20.5px;color:#ececec;left:-18.0px;width:100px;text-align:center;">16</div>
<div class="r" style="left:11.0px;top:679.6px;width:42.0px;height:1.2px;background:#626262;"></div>
<div class="t" style="top:657.3px;font-size:20.5px;color:#ececec;left:-18.0px;width:100px;text-align:center;">17</div>
<div class="r" style="left:11.0px;top:707.7px;width:42.0px;height:1.2px;background:#626262;"></div>
<div class="t" style="top:685.3px;font-size:20.5px;color:#ececec;left:-18.0px;width:100px;text-align:center;">18</div>
<div class="r" style="left:11.0px;top:735.7px;width:42.0px;height:1.2px;background:#626262;"></div>
<div class="t" style="top:713.3px;font-size:20.5px;color:#ececec;left:-18.0px;width:100px;text-align:center;">19</div>
<div class="r" style="left:11.0px;top:763.7px;width:42.0px;height:1.2px;background:#626262;"></div>
<div class="t" style="top:741.4px;font-size:20.5px;color:#ececec;left:-18.0px;width:100px;text-align:center;">20</div>
<div class="r" style="left:11.0px;top:791.7px;width:42.0px;height:1.2px;background:#626262;"></div>
<div class="t" style="top:769.4px;font-size:20.5px;color:#ececec;left:-18.0px;width:100px;text-align:center;">21</div>
<div class="r" style="left:11.0px;top:819.8px;width:42.0px;height:1.2px;background:#626262;"></div>
<div class="t" style="top:797.4px;font-size:20.5px;color:#ececec;left:-18.0px;width:100px;text-align:center;">22</div>
<div class="r" style="left:11.0px;top:847.8px;width:42.0px;height:1.2px;background:#626262;"></div>
<div class="t" style="top:825.5px;font-size:20.5px;color:#ececec;left:-18.0px;width:100px;text-align:center;">23</div>
<div class="r" style="left:11.0px;top:875.8px;width:42.0px;height:1.2px;background:#626262;"></div>
<div class="t" style="top:853.5px;font-size:20.5px;color:#ececec;left:-18.0px;width:100px;text-align:center;">24</div>
<div class="r" style="left:11.0px;top:903.9px;width:42.0px;height:1.2px;background:#626262;"></div>
<div class="t" style="top:881.5px;font-size:20.5px;color:#ececec;left:-18.0px;width:100px;text-align:center;">25</div>
<div class="r" style="left:11.0px;top:931.9px;width:42.0px;height:1.2px;background:#626262;"></div>
<div class="t" style="top:909.5px;font-size:20.5px;color:#ececec;left:-18.0px;width:100px;text-align:center;">26</div>
<div class="r" style="left:11.0px;top:959.9px;width:42.0px;height:1.2px;background:#626262;"></div>
<div class="t" style="top:937.6px;font-size:20.5px;color:#ececec;left:-18.0px;width:100px;text-align:center;">27</div>
<div class="r" style="left:11.0px;top:988.0px;width:42.0px;height:1.2px;background:#626262;"></div>
<div class="t" style="top:965.6px;font-size:20.5px;color:#ececec;left:-18.0px;width:100px;text-align:center;">28</div>
<div class="r" style="left:11.0px;top:1016.0px;width:42.0px;height:1.2px;background:#626262;"></div>
<div class="t" style="top:993.6px;font-size:20.5px;color:#ececec;left:-18.0px;width:100px;text-align:center;">29</div>
<div class="r" style="left:11.0px;top:1044.0px;width:42.0px;height:1.2px;background:#626262;"></div>
<div class="t" style="top:1021.7px;font-size:20.5px;color:#ececec;left:-18.0px;width:100px;text-align:center;">30</div>
<div class="r" style="left:11.0px;top:1072.0px;width:42.0px;height:1.2px;background:#626262;"></div>
<div class="t" style="top:1049.7px;font-size:20.5px;color:#ececec;left:-18.0px;width:100px;text-align:center;">31</div>
<div class="r" style="left:11.0px;top:1100.1px;width:42.0px;height:1.2px;background:#626262;"></div>
<div class="t" style="top:1077.7px;font-size:20.5px;color:#ececec;left:-18.0px;width:100px;text-align:center;">32</div>
<div class="r" style="left:11.0px;top:1128.1px;width:42.0px;height:1.2px;background:#626262;"></div>
<div class="t" style="top:1105.8px;font-size:20.5px;color:#ececec;left:-18.0px;width:100px;text-align:center;">33</div>
<div class="r" style="left:11.0px;top:1156.1px;width:42.0px;height:1.2px;background:#626262;"></div>
<div class="t" style="top:1133.8px;font-size:20.5px;color:#ececec;left:-18.0px;width:100px;text-align:center;">34</div>
<div class="r" style="left:11.0px;top:1184.2px;width:42.0px;height:1.2px;background:#626262;"></div>
<div class="t" style="top:1161.8px;font-size:20.5px;color:#ececec;left:-18.0px;width:100px;text-align:center;">35</div>
<div class="r" style="left:11.0px;top:1212.2px;width:42.0px;height:1.2px;background:#626262;"></div>
<div class="t" style="top:1189.8px;font-size:20.5px;color:#ececec;left:-18.0px;width:100px;text-align:center;">36</div>
<div class="r" style="left:11.0px;top:1246.9px;width:42.0px;height:1.2px;background:#626262;"></div>
<div class="t" style="top:1224.5px;font-size:20.5px;color:#ececec;left:-18.0px;width:100px;text-align:center;">37</div>
<div class="r" style="left:11.0px;top:1274.8px;width:42.0px;height:1.2px;background:#626262;"></div>
<div class="t" style="top:1252.4px;font-size:20.5px;color:#ececec;left:-18.0px;width:100px;text-align:center;">38</div>
<div class="r" style="left:11.0px;top:1302.8px;width:42.0px;height:1.2px;background:#626262;"></div>
<div class="t" style="top:1280.4px;font-size:20.5px;color:#ececec;left:-18.0px;width:100px;text-align:center;">39</div>
<div class="r" style="left:11.0px;top:1344.5px;width:42.0px;height:1.2px;background:#626262;"></div>
<div class="t" style="top:1322.1px;font-size:20.5px;color:#ececec;left:-18.0px;width:100px;text-align:center;">40</div>
<div class="r" style="left:11.0px;top:1372.6px;width:42.0px;height:1.2px;background:#626262;"></div>
<div class="t" style="top:1350.2px;font-size:20.5px;color:#ececec;left:-18.0px;width:100px;text-align:center;">41</div>
<div class="r" style="left:11.0px;top:1400.7px;width:42.0px;height:1.2px;background:#626262;"></div>
<div class="t" style="top:1378.3px;font-size:20.5px;color:#ececec;left:-18.0px;width:100px;text-align:center;">42</div>
<div class="r" style="left:11.0px;top:1428.6px;width:42.0px;height:1.2px;background:#626262;"></div>
<div class="t" style="top:1406.2px;font-size:20.5px;color:#ececec;left:-18.0px;width:100px;text-align:center;">43</div>
<div class="r" style="left:11.0px;top:1456.7px;width:42.0px;height:1.2px;background:#626262;"></div>
<div class="t" style="top:1434.3px;font-size:20.5px;color:#ececec;left:-18.0px;width:100px;text-align:center;">44</div>
<div class="r" style="left:11.0px;top:1484.8px;width:42.0px;height:1.2px;background:#626262;"></div>
<div class="t" style="top:1462.4px;font-size:20.5px;color:#ececec;left:-18.0px;width:100px;text-align:center;">45</div>
<div class="r" style="left:11.0px;top:1526.4px;width:42.0px;height:1.2px;background:#626262;"></div>
<div class="t" style="top:1504.0px;font-size:20.5px;color:#ececec;left:-18.0px;width:100px;text-align:center;">46</div>
<div class="r" style="left:11.0px;top:1554.6px;width:42.0px;height:1.2px;background:#626262;"></div>
<div class="t" style="top:1532.2px;font-size:20.5px;color:#ececec;left:-18.0px;width:100px;text-align:center;">47</div>
<div class="r" style="left:11.0px;top:1582.8px;width:42.0px;height:1.2px;background:#626262;"></div>
<div class="t" style="top:1560.4px;font-size:20.5px;color:#ececec;left:-18.0px;width:100px;text-align:center;">48</div>
<div class="r" style="left:11.0px;top:1610.8px;width:42.0px;height:1.2px;background:#626262;"></div>
<div class="t" style="top:1588.4px;font-size:20.5px;color:#ececec;left:-18.0px;width:100px;text-align:center;">49</div>
<div class="r" style="left:11.0px;top:1652.7px;width:42.0px;height:1.2px;background:#626262;"></div>
<div class="t" style="top:1630.3px;font-size:20.5px;color:#ececec;left:-18.0px;width:100px;text-align:center;">50</div>
<div class="r" style="left:11.0px;top:459.7px;width:42.0px;height:1.1px;background:#626262;"></div>
<div class="r" style="left:11.0px;top:515.3px;width:42.0px;height:1.2px;background:#8a8a8a;"></div>
<div class="r" style="left:11.0px;top:1653.0px;width:42.0px;height:1.2px;background:#626262;"></div>
<div class="r" style="left:53.0px;top:305.0px;width:2.0px;height:50.0px;background:#1e7a45;"></div>
<div class="r" style="left:53px;top:305px;width:2807px;height:1365px;background:#fff;overflow:hidden">
<div class="t" style="top:6.4px;font-size:40px;color:#1f1f1f;font-weight:700;left:40.5px;transform:scaleX(1.008);transform-origin:left top;-webkit-text-stroke:0.9px #1f1f1f;">Startup Costs (CAPEX)</div>
<div class="t" style="top:55.0px;font-size:33px;color:#050505;font-weight:700;left:40.0px;transform:scaleX(1.068);transform-origin:left top;-webkit-text-stroke:0.8px #050505;">ABC Company Inc.</div>
<div class="t" style="top:94.5px;font-size:21.5px;color:#2b78e4;font-weight:700;left:39.0px;transform:scaleX(1.06);transform-origin:left top;-webkit-text-stroke:0.5px #2b78e4;">Go to Table of Contents</div>
<div class="r" style="left:39.3px;top:115.0px;width:257.7px;height:2.2px;background:#2b78e4;"></div>
<div class="t" style="top:157.2px;font-size:22px;color:#0a0a0a;font-weight:700;left:39.0px;transform:scaleX(1.042);transform-origin:left top;-webkit-text-stroke:0.5px #0a0a0a;">Fiscal Year</div>
<div class="t" style="top:185.6px;font-size:22px;color:#0a0a0a;font-weight:700;left:39.0px;transform:scaleX(1.075);transform-origin:left top;-webkit-text-stroke:0.5px #0a0a0a;">Month</div>
<div class="t" style="top:157.2px;font-size:22px;color:#0a0a0a;font-weight:700;left:1415.0px;width:300px;text-align:right;transform:scaleX(1.09);transform-origin:right top;-webkit-text-stroke:0.5px #0a0a0a;">2025</div>
<div class="t" style="top:185.2px;font-size:22px;color:#0a0a0a;font-weight:700;left:1415.0px;width:300px;text-align:right;transform:scaleX(1.1);transform-origin:right top;-webkit-text-stroke:0.5px #0a0a0a;">Dec-25</div>
<div class="t" style="top:157.2px;font-size:22px;color:#0a0a0a;font-weight:700;left:1584.0px;width:300px;text-align:right;transform:scaleX(1.09);transform-origin:right top;-webkit-text-stroke:0.5px #0a0a0a;">2026</div>
<div class="t" style="top:185.2px;font-size:22px;color:#0a0a0a;font-weight:700;left:1584.0px;width:300px;text-align:right;transform:scaleX(1.1);transform-origin:right top;-webkit-text-stroke:0.5px #0a0a0a;">Jan-26</div>
<div class="t" style="top:157.2px;font-size:22px;color:#0a0a0a;font-weight:700;left:1753.0px;width:300px;text-align:right;transform:scaleX(1.09);transform-origin:right top;-webkit-text-stroke:0.5px #0a0a0a;">2026</div>
<div class="t" style="top:185.2px;font-size:22px;color:#0a0a0a;font-weight:700;left:1753.0px;width:300px;text-align:right;transform:scaleX(1.1);transform-origin:right top;-webkit-text-stroke:0.5px #0a0a0a;">Feb-26</div>
<div class="t" style="top:157.2px;font-size:22px;color:#0a0a0a;font-weight:700;left:1922.0px;width:300px;text-align:right;transform:scaleX(1.09);transform-origin:right top;-webkit-text-stroke:0.5px #0a0a0a;">2026</div>
<div class="t" style="top:185.2px;font-size:22px;color:#0a0a0a;font-weight:700;left:1922.0px;width:300px;text-align:right;transform:scaleX(1.1);transform-origin:right top;-webkit-text-stroke:0.5px #0a0a0a;">Mar-26</div>
<div class="t" style="top:157.2px;font-size:22px;color:#0a0a0a;font-weight:700;left:2091.0px;width:300px;text-align:right;transform:scaleX(1.09);transform-origin:right top;-webkit-text-stroke:0.5px #0a0a0a;">2026</div>
<div class="t" style="top:185.2px;font-size:22px;color:#0a0a0a;font-weight:700;left:2091.0px;width:300px;text-align:right;transform:scaleX(1.1);transform-origin:right top;-webkit-text-stroke:0.5px #0a0a0a;">Apr-26</div>
<div class="t" style="top:157.2px;font-size:22px;color:#0a0a0a;font-weight:700;left:2260.0px;width:300px;text-align:right;transform:scaleX(1.09);transform-origin:right top;-webkit-text-stroke:0.5px #0a0a0a;">2026</div>
<div class="t" style="top:185.2px;font-size:22px;color:#0a0a0a;font-weight:700;left:2260.0px;width:300px;text-align:right;transform:scaleX(1.1);transform-origin:right top;-webkit-text-stroke:0.5px #0a0a0a;">May-26</div>
<div class="t" style="top:157.2px;font-size:22px;color:#0a0a0a;font-weight:700;left:2429.0px;width:300px;text-align:right;transform:scaleX(1.09);transform-origin:right top;-webkit-text-stroke:0.5px #0a0a0a;">2026</div>
<div class="t" style="top:185.2px;font-size:22px;color:#0a0a0a;font-weight:700;left:2429.0px;width:300px;text-align:right;transform:scaleX(1.1);transform-origin:right top;-webkit-text-stroke:0.5px #0a0a0a;">Jun-26</div>
<div class="t" style="top:157.2px;font-size:22px;color:#0a0a0a;font-weight:700;left:2598.0px;width:300px;text-align:right;transform:scaleX(1.09);transform-origin:right top;-webkit-text-stroke:0.5px #0a0a0a;">2026</div>
<div class="t" style="top:185.2px;font-size:22px;color:#0a0a0a;font-weight:700;left:2598.0px;width:300px;text-align:right;transform:scaleX(1.1);transform-origin:right top;-webkit-text-stroke:0.5px #0a0a0a;">Jul-26</div>
<div class="r" style="left:0.0px;top:208.6px;width:2807.0px;height:1.4px;background:#a6a6a6;"></div>
<div class="t" style="top:242.6px;font-size:39.5px;color:#1f1f1f;font-weight:700;left:40.5px;transform:scaleX(1.028);transform-origin:left top;-webkit-text-stroke:0.9px #1f1f1f;">Startup Costs, $</div>
<div class="r" style="left:84.0px;top:312.0px;width:1636.0px;height:33.0px;background:#6b72e6;"></div>
<div class="t" style="top:319.3px;font-size:21.5px;color:#ffffff;font-weight:700;left:289.0px;width:400px;text-align:center;transform:scaleX(1.065);transform-origin:center top;-webkit-text-stroke:0.45px #fff;">Categories</div>
<div class="t" style="top:319.3px;font-size:21.5px;color:#ffffff;font-weight:700;left:797.0px;width:400px;text-align:center;transform:scaleX(1.065);transform-origin:center top;-webkit-text-stroke:0.45px #fff;">Launch date</div>
<div class="t" style="top:319.3px;font-size:21.5px;color:#ffffff;font-weight:700;left:1003.0px;width:400px;text-align:center;transform:scaleX(1.065);transform-origin:center top;-webkit-text-stroke:0.45px #fff;">End date</div>
<div class="t" style="top:319.3px;font-size:21.5px;color:#ffffff;font-weight:700;left:1209.5px;width:400px;text-align:center;transform:scaleX(1.065);transform-origin:center top;-webkit-text-stroke:0.45px #fff;">Spending, $</div>
<div class="t" style="top:319.3px;font-size:21.5px;color:#ffffff;font-weight:700;left:1416.5px;width:400px;text-align:center;transform:scaleX(1.065);transform-origin:center top;-webkit-text-stroke:0.45px #fff;">Amortizable?</div>
<div class="r" style="left:85.0px;top:347.2px;width:1633.5px;height:560.6px;background:#fff06b;"></div>
<div class="r" style="left:84.0px;top:374.5px;width:1636.0px;height:1.5px;background:#ffffff;"></div>
<div class="r" style="left:84.0px;top:402.5px;width:1636.0px;height:1.5px;background:#ffffff;"></div>
<div class="r" style="left:84.0px;top:430.5px;width:1636.0px;height:1.5px;background:#ffffff;"></div>
<div class="r" style="left:84.0px;top:458.6px;width:1636.0px;height:1.5px;background:#ffffff;"></div>
<div class="r" style="left:84.0px;top:486.6px;width:1636.0px;height:1.5px;background:#ffffff;"></div>
<div class="r" style="left:84.0px;top:514.6px;width:1636.0px;height:1.5px;background:#ffffff;"></div>
<div class="r" style="left:84.0px;top:542.7px;width:1636.0px;height:1.5px;background:#ffffff;"></div>
<div class="r" style="left:84.0px;top:570.7px;width:1636.0px;height:1.5px;background:#ffffff;"></div>
<div class="r" style="left:84.0px;top:598.7px;width:1636.0px;height:1.5px;background:#ffffff;"></div>
<div class="r" style="left:84.0px;top:626.7px;width:1636.0px;height:1.5px;background:#ffffff;"></div>
<div class="r" style="left:84.0px;top:654.8px;width:1636.0px;height:1.5px;background:#ffffff;"></div>
<div class="r" style="left:84.0px;top:682.8px;width:1636.0px;height:1.5px;background:#ffffff;"></div>
<div class="r" style="left:84.0px;top:710.8px;width:1636.0px;height:1.5px;background:#ffffff;"></div>
<div class="r" style="left:84.0px;top:738.9px;width:1636.0px;height:1.5px;background:#ffffff;"></div>
<div class="r" style="left:84.0px;top:766.9px;width:1636.0px;height:1.5px;background:#ffffff;"></div>
<div class="r" style="left:84.0px;top:794.9px;width:1636.0px;height:1.5px;background:#ffffff;"></div>
<div class="r" style="left:84.0px;top:823.0px;width:1636.0px;height:1.5px;background:#ffffff;"></div>
<div class="r" style="left:84.0px;top:851.0px;width:1636.0px;height:1.5px;background:#ffffff;"></div>
<div class="r" style="left:84.0px;top:879.0px;width:1636.0px;height:1.5px;background:#ffffff;"></div>
<div class="r" style="left:84.0px;top:345.0px;width:1636.0px;height:2.5px;background:#ffffff;"></div>
<div class="r" style="left:893.5px;top:312.0px;width:2.3px;height:595.8px;background:#ffffff;"></div>
<div class="r" style="left:1099.5px;top:312.0px;width:2.3px;height:595.8px;background:#ffffff;"></div>
<div class="r" style="left:1305.5px;top:312.0px;width:2.3px;height:595.8px;background:#ffffff;"></div>
<div class="r" style="left:1512.5px;top:312.0px;width:2.3px;height:595.8px;background:#ffffff;"></div>
<div class="t" style="top:350.8px;font-size:22px;color:#151515;letter-spacing:-0.14px;left:86.5px;">Facility Construction &amp; Build-Out</div>
<div class="t" style="top:350.8px;font-size:22px;color:#151515;letter-spacing:-0.1px;left:897.0px;width:200px;text-align:center;">Jan-26</div>
<div class="t" style="top:350.8px;font-size:22px;color:#151515;letter-spacing:-0.1px;left:1103.0px;width:200px;text-align:center;">Sep-26</div>
<div class="t" style="top:350.8px;font-size:22px;color:#151515;letter-spacing:-0.12px;left:1201.2px;width:300px;text-align:right;">2,500,000</div>
<div class="t" style="top:350.8px;font-size:22px;color:#151515;letter-spacing:-0.5px;left:1517.0px;width:200px;text-align:center;">Yes</div>
<div class="t" style="top:378.8px;font-size:22px;color:#151515;letter-spacing:-0.14px;left:86.5px;">Slaughter Line Equipment</div>
<div class="t" style="top:378.8px;font-size:22px;color:#151515;letter-spacing:-0.1px;left:897.0px;width:200px;text-align:center;">Mar-26</div>
<div class="t" style="top:378.8px;font-size:22px;color:#151515;letter-spacing:-0.1px;left:1103.0px;width:200px;text-align:center;">Oct-26</div>
<div class="t" style="top:378.8px;font-size:22px;color:#151515;letter-spacing:-0.12px;left:1201.2px;width:300px;text-align:right;">750,000</div>
<div class="t" style="top:378.8px;font-size:22px;color:#151515;letter-spacing:-0.5px;left:1517.0px;width:200px;text-align:center;">Yes</div>
<div class="t" style="top:406.9px;font-size:22px;color:#151515;letter-spacing:-0.14px;left:86.5px;">Meat Processing &amp; Deboning Machines</div>
<div class="t" style="top:406.9px;font-size:22px;color:#151515;letter-spacing:-0.1px;left:897.0px;width:200px;text-align:center;">Apr-26</div>
<div class="t" style="top:406.9px;font-size:22px;color:#151515;letter-spacing:-0.1px;left:1103.0px;width:200px;text-align:center;">Oct-26</div>
<div class="t" style="top:406.9px;font-size:22px;color:#151515;letter-spacing:-0.12px;left:1201.2px;width:300px;text-align:right;">450,000</div>
<div class="t" style="top:406.9px;font-size:22px;color:#151515;letter-spacing:-0.5px;left:1517.0px;width:200px;text-align:center;">Yes</div>
<div class="t" style="top:434.9px;font-size:22px;color:#151515;letter-spacing:-0.14px;left:86.5px;">Cold Storage &amp; Refrigeration Units</div>
<div class="t" style="top:434.9px;font-size:22px;color:#151515;letter-spacing:-0.1px;left:897.0px;width:200px;text-align:center;">Feb-26</div>
<div class="t" style="top:434.9px;font-size:22px;color:#151515;letter-spacing:-0.1px;left:1103.0px;width:200px;text-align:center;">Sep-26</div>
<div class="t" style="top:434.9px;font-size:22px;color:#151515;letter-spacing:-0.12px;left:1201.2px;width:300px;text-align:right;">600,000</div>
<div class="t" style="top:434.9px;font-size:22px;color:#151515;letter-spacing:-0.5px;left:1517.0px;width:200px;text-align:center;">Yes</div>
<div class="t" style="top:462.9px;font-size:22px;color:#151515;letter-spacing:-0.14px;left:86.5px;">Packaging and Labeling Equipment</div>
<div class="t" style="top:462.9px;font-size:22px;color:#151515;letter-spacing:-0.1px;left:897.0px;width:200px;text-align:center;">May-26</div>
<div class="t" style="top:462.9px;font-size:22px;color:#151515;letter-spacing:-0.1px;left:1103.0px;width:200px;text-align:center;">Oct-26</div>
<div class="t" style="top:462.9px;font-size:22px;color:#151515;letter-spacing:-0.12px;left:1201.2px;width:300px;text-align:right;">200,000</div>
<div class="t" style="top:462.9px;font-size:22px;color:#151515;letter-spacing:-0.5px;left:1517.0px;width:200px;text-align:center;">Yes</div>
<div class="t" style="top:491.0px;font-size:22px;color:#151515;letter-spacing:-0.14px;left:86.5px;">Food Safety &amp; Sterilization Systems</div>
<div class="t" style="top:491.0px;font-size:22px;color:#151515;letter-spacing:-0.1px;left:897.0px;width:200px;text-align:center;">Mar-26</div>
<div class="t" style="top:491.0px;font-size:22px;color:#151515;letter-spacing:-0.1px;left:1103.0px;width:200px;text-align:center;">Sep-26</div>
<div class="t" style="top:491.0px;font-size:22px;color:#151515;letter-spacing:-0.12px;left:1201.2px;width:300px;text-align:right;">150,000</div>
<div class="t" style="top:491.0px;font-size:22px;color:#151515;letter-spacing:-0.5px;left:1517.0px;width:200px;text-align:center;">Yes</div>
<div class="t" style="top:519.0px;font-size:22px;color:#151515;letter-spacing:-0.14px;left:86.5px;">Delivery and Transport Vehicles</div>
<div class="t" style="top:519.0px;font-size:22px;color:#151515;letter-spacing:-0.1px;left:897.0px;width:200px;text-align:center;">Oct-26</div>
<div class="t" style="top:519.0px;font-size:22px;color:#151515;letter-spacing:-0.1px;left:1103.0px;width:200px;text-align:center;">Dec-26</div>
<div class="t" style="top:519.0px;font-size:22px;color:#151515;letter-spacing:-0.12px;left:1201.2px;width:300px;text-align:right;">300,000</div>
<div class="t" style="top:519.0px;font-size:22px;color:#151515;letter-spacing:-0.5px;left:1517.0px;width:200px;text-align:center;">Yes</div>
<div class="t" style="top:547.0px;font-size:22px;color:#151515;letter-spacing:-0.14px;left:86.5px;">Office and Administrative Setup</div>
<div class="t" style="top:547.0px;font-size:22px;color:#151515;letter-spacing:-0.1px;left:897.0px;width:200px;text-align:center;">Jan-26</div>
<div class="t" style="top:547.0px;font-size:22px;color:#151515;letter-spacing:-0.1px;left:1103.0px;width:200px;text-align:center;">Mar-26</div>
<div class="t" style="top:547.0px;font-size:22px;color:#151515;letter-spacing:-0.12px;left:1201.2px;width:300px;text-align:right;">75,000</div>
<div class="t" style="top:547.0px;font-size:22px;color:#151515;letter-spacing:-0.5px;left:1517.0px;width:200px;text-align:center;">Yes</div>
<div class="t" style="top:575.0px;font-size:22px;color:#151515;left:87.5px;">-</div>
<div class="t" style="top:575.0px;font-size:22px;color:#151515;letter-spacing:-0.5px;left:1517.0px;width:200px;text-align:center;">Yes</div>
<div class="t" style="top:603.1px;font-size:22px;color:#151515;left:87.5px;">-</div>
<div class="t" style="top:603.1px;font-size:22px;color:#151515;letter-spacing:-0.5px;left:1517.0px;width:200px;text-align:center;">Yes</div>
<div class="t" style="top:631.1px;font-size:22px;color:#151515;left:87.5px;">-</div>
<div class="t" style="top:631.1px;font-size:22px;color:#151515;letter-spacing:-0.5px;left:1517.0px;width:200px;text-align:center;">Yes</div>
<div class="t" style="top:659.1px;font-size:22px;color:#151515;left:87.5px;">-</div>
<div class="t" style="top:659.1px;font-size:22px;color:#151515;letter-spacing:-0.5px;left:1517.0px;width:200px;text-align:center;">Yes</div>
<div class="t" style="top:687.2px;font-size:22px;color:#151515;left:87.5px;">-</div>
<div class="t" style="top:687.2px;font-size:22px;color:#151515;letter-spacing:-0.5px;left:1517.0px;width:200px;text-align:center;">Yes</div>
<div class="t" style="top:715.2px;font-size:22px;color:#151515;left:87.5px;">-</div>
<div class="t" style="top:715.2px;font-size:22px;color:#151515;letter-spacing:-0.5px;left:1517.0px;width:200px;text-align:center;">Yes</div>
<div class="t" style="top:743.2px;font-size:22px;color:#151515;left:87.5px;">-</div>
<div class="t" style="top:743.2px;font-size:22px;color:#151515;letter-spacing:-0.5px;left:1517.0px;width:200px;text-align:center;">Yes</div>
<div class="t" style="top:771.3px;font-size:22px;color:#151515;left:87.5px;">-</div>
<div class="t" style="top:771.3px;font-size:22px;color:#151515;letter-spacing:-0.5px;left:1517.0px;width:200px;text-align:center;">Yes</div>
<div class="t" style="top:799.3px;font-size:22px;color:#151515;left:87.5px;">-</div>
<div class="t" style="top:799.3px;font-size:22px;color:#151515;letter-spacing:-0.5px;left:1517.0px;width:200px;text-align:center;">Yes</div>
<div class="t" style="top:827.3px;font-size:22px;color:#151515;left:87.5px;">-</div>
<div class="t" style="top:827.3px;font-size:22px;color:#151515;letter-spacing:-0.5px;left:1517.0px;width:200px;text-align:center;">Yes</div>
<div class="t" style="top:855.3px;font-size:22px;color:#151515;left:87.5px;">-</div>
<div class="t" style="top:855.3px;font-size:22px;color:#151515;letter-spacing:-0.5px;left:1517.0px;width:200px;text-align:center;">Yes</div>
<div class="t" style="top:883.4px;font-size:22px;color:#151515;left:87.5px;">-</div>
<div class="t" style="top:883.4px;font-size:22px;color:#151515;letter-spacing:-0.5px;left:1517.0px;width:200px;text-align:center;">Yes</div>
<div class="t" style="top:350.8px;font-size:22px;color:#151515;letter-spacing:-0.2px;left:1576.8px;width:300px;text-align:right;">277,778</div>
<div class="t" style="top:350.8px;font-size:22px;color:#151515;letter-spacing:-0.2px;left:1745.8px;width:300px;text-align:right;">277,778</div>
<div class="t" style="top:350.8px;font-size:22px;color:#151515;letter-spacing:-0.2px;left:1914.8px;width:300px;text-align:right;">277,778</div>
<div class="t" style="top:350.8px;font-size:22px;color:#151515;letter-spacing:-0.2px;left:2083.8px;width:300px;text-align:right;">277,778</div>
<div class="t" style="top:350.8px;font-size:22px;color:#151515;letter-spacing:-0.2px;left:2252.8px;width:300px;text-align:right;">277,778</div>
<div class="t" style="top:350.8px;font-size:22px;color:#151515;letter-spacing:-0.2px;left:2421.8px;width:300px;text-align:right;">277,778</div>
<div class="t" style="top:378.8px;font-size:22px;color:#151515;left:1753.5px;width:100px;text-align:right;">-</div>
<div class="t" style="top:378.8px;font-size:22px;color:#151515;left:1922.5px;width:100px;text-align:right;">-</div>
<div class="t" style="top:378.8px;font-size:22px;color:#151515;letter-spacing:-0.2px;left:1914.8px;width:300px;text-align:right;">93,750</div>
<div class="t" style="top:378.8px;font-size:22px;color:#151515;letter-spacing:-0.2px;left:2083.8px;width:300px;text-align:right;">93,750</div>
<div class="t" style="top:378.8px;font-size:22px;color:#151515;letter-spacing:-0.2px;left:2252.8px;width:300px;text-align:right;">93,750</div>
<div class="t" style="top:378.8px;font-size:22px;color:#151515;letter-spacing:-0.2px;left:2421.8px;width:300px;text-align:right;">93,750</div>
<div class="t" style="top:406.9px;font-size:22px;color:#151515;left:1753.5px;width:100px;text-align:right;">-</div>
<div class="t" style="top:406.9px;font-size:22px;color:#151515;left:1922.5px;width:100px;text-align:right;">-</div>
<div class="t" style="top:406.9px;font-size:22px;color:#151515;left:2091.5px;width:100px;text-align:right;">-</div>
<div class="t" style="top:406.9px;font-size:22px;color:#151515;letter-spacing:-0.2px;left:2083.8px;width:300px;text-align:right;">64,286</div>
<div class="t" style="top:406.9px;font-size:22px;color:#151515;letter-spacing:-0.2px;left:2252.8px;width:300px;text-align:right;">64,286</div>
<div class="t" style="top:406.9px;font-size:22px;color:#151515;letter-spacing:-0.2px;left:2421.8px;width:300px;text-align:right;">64,286</div>
<div class="t" style="top:434.9px;font-size:22px;color:#151515;left:1753.5px;width:100px;text-align:right;">-</div>
<div class="t" style="top:434.9px;font-size:22px;color:#151515;letter-spacing:-0.2px;left:1745.8px;width:300px;text-align:right;">75,000</div>
<div class="t" style="top:434.9px;font-size:22px;color:#151515;letter-spacing:-0.2px;left:1914.8px;width:300px;text-align:right;">75,000</div>
<div class="t" style="top:434.9px;font-size:22px;color:#151515;letter-spacing:-0.2px;left:2083.8px;width:300px;text-align:right;">75,000</div>
<div class="t" style="top:434.9px;font-size:22px;color:#151515;letter-spacing:-0.2px;left:2252.8px;width:300px;text-align:right;">75,000</div>
<div class="t" style="top:434.9px;font-size:22px;color:#151515;letter-spacing:-0.2px;left:2421.8px;width:300px;text-align:right;">75,000</div>
<div class="t" style="top:462.9px;font-size:22px;color:#151515;left:1753.5px;width:100px;text-align:right;">-</div>
<div class="t" style="top:462.9px;font-size:22px;color:#151515;left:1922.5px;width:100px;text-align:right;">-</div>
<div class="t" style="top:462.9px;font-size:22px;color:#151515;left:2091.5px;width:100px;text-align:right;">-</div>
<div class="t" style="top:462.9px;font-size:22px;color:#151515;left:2260.5px;width:100px;text-align:right;">-</div>
<div class="t" style="top:462.9px;font-size:22px;color:#151515;letter-spacing:-0.2px;left:2252.8px;width:300px;text-align:right;">33,333</div>
<div class="t" style="top:462.9px;font-size:22px;color:#151515;letter-spacing:-0.2px;left:2421.8px;width:300px;text-align:right;">33,333</div>
<div class="t" style="top:491.0px;font-size:22px;color:#151515;left:1753.5px;width:100px;text-align:right;">-</div>
<div class="t" style="top:491.0px;font-size:22px;color:#151515;left:1922.5px;width:100px;text-align:right;">-</div>
<div class="t" style="top:491.0px;font-size:22px;color:#151515;letter-spacing:-0.2px;left:1914.8px;width:300px;text-align:right;">21,429</div>
<div class="t" style="top:491.0px;font-size:22px;color:#151515;letter-spacing:-0.2px;left:2083.8px;width:300px;text-align:right;">21,429</div>
<div class="t" style="top:491.0px;font-size:22px;color:#151515;letter-spacing:-0.2px;left:2252.8px;width:300px;text-align:right;">21,429</div>
<div class="t" style="top:491.0px;font-size:22px;color:#151515;letter-spacing:-0.2px;left:2421.8px;width:300px;text-align:right;">21,429</div>
<div class="t" style="top:519.0px;font-size:22px;color:#151515;left:1753.5px;width:100px;text-align:right;">-</div>
<div class="t" style="top:519.0px;font-size:22px;color:#151515;left:1922.5px;width:100px;text-align:right;">-</div>
<div class="t" style="top:519.0px;font-size:22px;color:#151515;left:2091.5px;width:100px;text-align:right;">-</div>
<div class="t" style="top:519.0px;font-size:22px;color:#151515;left:2260.5px;width:100px;text-align:right;">-</div>
<div class="t" style="top:519.0px;font-size:22px;color:#151515;left:2429.5px;width:100px;text-align:right;">-</div>
<div class="t" style="top:519.0px;font-size:22px;color:#151515;left:2598.5px;width:100px;text-align:right;">-</div>
<div class="t" style="top:547.0px;font-size:22px;color:#151515;letter-spacing:-0.2px;left:1576.8px;width:300px;text-align:right;">25,000</div>
<div class="t" style="top:547.0px;font-size:22px;color:#151515;letter-spacing:-0.2px;left:1745.8px;width:300px;text-align:right;">25,000</div>
<div class="t" style="top:547.0px;font-size:22px;color:#151515;letter-spacing:-0.2px;left:1914.8px;width:300px;text-align:right;">25,000</div>
<div class="t" style="top:547.0px;font-size:22px;color:#151515;left:2260.5px;width:100px;text-align:right;">-</div>
<div class="t" style="top:547.0px;font-size:22px;color:#151515;left:2429.5px;width:100px;text-align:right;">-</div>
<div class="t" style="top:547.0px;font-size:22px;color:#151515;left:2598.5px;width:100px;text-align:right;">-</div>
<div class="t" style="top:575.0px;font-size:22px;color:#151515;left:1753.5px;width:100px;text-align:right;">-</div>
<div class="t" style="top:575.0px;font-size:22px;color:#151515;left:1922.5px;width:100px;text-align:right;">-</div>
<div class="t" style="top:575.0px;font-size:22px;color:#151515;left:2091.5px;width:100px;text-align:right;">-</div>
<div class="t" style="top:575.0px;font-size:22px;color:#151515;left:2260.5px;width:100px;text-align:right;">-</div>
<div class="t" style="top:575.0px;font-size:22px;color:#151515;left:2429.5px;width:100px;text-align:right;">-</div>
<div class="t" style="top:575.0px;font-size:22px;color:#151515;left:2598.5px;width:100px;text-align:right;">-</div>
<div class="t" style="top:603.1px;font-size:22px;color:#151515;left:1753.5px;width:100px;text-align:right;">-</div>
<div class="t" style="top:603.1px;font-size:22px;color:#151515;left:1922.5px;width:100px;text-align:right;">-</div>
<div class="t" style="top:603.1px;font-size:22px;color:#151515;left:2091.5px;width:100px;text-align:right;">-</div>
<div class="t" style="top:603.1px;font-size:22px;color:#151515;left:2260.5px;width:100px;text-align:right;">-</div>
<div class="t" style="top:603.1px;font-size:22px;color:#151515;left:2429.5px;width:100px;text-align:right;">-</div>
<div class="t" style="top:603.1px;font-size:22px;color:#151515;left:2598.5px;width:100px;text-align:right;">-</div>
<div class="t" style="top:631.1px;font-size:22px;color:#151515;left:1753.5px;width:100px;text-align:right;">-</div>
<div class="t" style="top:631.1px;font-size:22px;color:#151515;left:1922.5px;width:100px;text-align:right;">-</div>
<div class="t" style="top:631.1px;font-size:22px;color:#151515;left:2091.5px;width:100px;text-align:right;">-</div>
<div class="t" style="top:631.1px;font-size:22px;color:#151515;left:2260.5px;width:100px;text-align:right;">-</div>
<div class="t" style="top:631.1px;font-size:22px;color:#151515;left:2429.5px;width:100px;text-align:right;">-</div>
<div class="t" style="top:631.1px;font-size:22px;color:#151515;left:2598.5px;width:100px;text-align:right;">-</div>
<div class="t" style="top:659.1px;font-size:22px;color:#151515;left:1753.5px;width:100px;text-align:right;">-</div>
<div class="t" style="top:659.1px;font-size:22px;color:#151515;left:1922.5px;width:100px;text-align:right;">-</div>
<div class="t" style="top:659.1px;font-size:22px;color:#151515;left:2091.5px;width:100px;text-align:right;">-</div>
<div class="t" style="top:659.1px;font-size:22px;color:#151515;left:2260.5px;width:100px;text-align:right;">-</div>
<div class="t" style="top:659.1px;font-size:22px;color:#151515;left:2429.5px;width:100px;text-align:right;">-</div>
<div class="t" style="top:659.1px;font-size:22px;color:#151515;left:2598.5px;width:100px;text-align:right;">-</div>
<div class="t" style="top:687.2px;font-size:22px;color:#151515;left:1753.5px;width:100px;text-align:right;">-</div>
<div class="t" style="top:687.2px;font-size:22px;color:#151515;left:1922.5px;width:100px;text-align:right;">-</div>
<div class="t" style="top:687.2px;font-size:22px;color:#151515;left:2091.5px;width:100px;text-align:right;">-</div>
<div class="t" style="top:687.2px;font-size:22px;color:#151515;left:2260.5px;width:100px;text-align:right;">-</div>
<div class="t" style="top:687.2px;font-size:22px;color:#151515;left:2429.5px;width:100px;text-align:right;">-</div>
<div class="t" style="top:687.2px;font-size:22px;color:#151515;left:2598.5px;width:100px;text-align:right;">-</div>
<div class="t" style="top:715.2px;font-size:22px;color:#151515;left:1753.5px;width:100px;text-align:right;">-</div>
<div class="t" style="top:715.2px;font-size:22px;color:#151515;left:1922.5px;width:100px;text-align:right;">-</div>
<div class="t" style="top:715.2px;font-size:22px;color:#151515;left:2091.5px;width:100px;text-align:right;">-</div>
<div class="t" style="top:715.2px;font-size:22px;color:#151515;left:2260.5px;width:100px;text-align:right;">-</div>
<div class="t" style="top:715.2px;font-size:22px;color:#151515;left:2429.5px;width:100px;text-align:right;">-</div>
<div class="t" style="top:715.2px;font-size:22px;color:#151515;left:2598.5px;width:100px;text-align:right;">-</div>
<div class="t" style="top:743.2px;font-size:22px;color:#151515;left:1753.5px;width:100px;text-align:right;">-</div>
<div class="t" style="top:743.2px;font-size:22px;color:#151515;left:1922.5px;width:100px;text-align:right;">-</div>
<div class="t" style="top:743.2px;font-size:22px;color:#151515;left:2091.5px;width:100px;text-align:right;">-</div>
<div class="t" style="top:743.2px;font-size:22px;color:#151515;left:2260.5px;width:100px;text-align:right;">-</div>
<div class="t" style="top:743.2px;font-size:22px;color:#151515;left:2429.5px;width:100px;text-align:right;">-</div>
<div class="t" style="top:743.2px;font-size:22px;color:#151515;left:2598.5px;width:100px;text-align:right;">-</div>
<div class="t" style="top:771.3px;font-size:22px;color:#151515;left:1753.5px;width:100px;text-align:right;">-</div>
<div class="t" style="top:771.3px;font-size:22px;color:#151515;left:1922.5px;width:100px;text-align:right;">-</div>
<div class="t" style="top:771.3px;font-size:22px;color:#151515;left:2091.5px;width:100px;text-align:right;">-</div>
<div class="t" style="top:771.3px;font-size:22px;color:#151515;left:2260.5px;width:100px;text-align:right;">-</div>
<div class="t" style="top:771.3px;font-size:22px;color:#151515;left:2429.5px;width:100px;text-align:right;">-</div>
<div class="t" style="top:771.3px;font-size:22px;color:#151515;left:2598.5px;width:100px;text-align:right;">-</div>
<div class="t" style="top:799.3px;font-size:22px;color:#151515;left:1753.5px;width:100px;text-align:right;">-</div>
<div class="t" style="top:799.3px;font-size:22px;color:#151515;left:1922.5px;width:100px;text-align:right;">-</div>
<div class="t" style="top:799.3px;font-size:22px;color:#151515;left:2091.5px;width:100px;text-align:right;">-</div>
<div class="t" style="top:799.3px;font-size:22px;color:#151515;left:2260.5px;width:100px;text-align:right;">-</div>
<div class="t" style="top:799.3px;font-size:22px;color:#151515;left:2429.5px;width:100px;text-align:right;">-</div>
<div class="t" style="top:799.3px;font-size:22px;color:#151515;left:2598.5px;width:100px;text-align:right;">-</div>
<div class="t" style="top:827.3px;font-size:22px;color:#151515;left:1753.5px;width:100px;text-align:right;">-</div>
<div class="t" style="top:827.3px;font-size:22px;color:#151515;left:1922.5px;width:100px;text-align:right;">-</div>
<div class="t" style="top:827.3px;font-size:22px;color:#151515;left:2091.5px;width:100px;text-align:right;">-</div>
<div class="t" style="top:827.3px;font-size:22px;color:#151515;left:2260.5px;width:100px;text-align:right;">-</div>
<div class="t" style="top:827.3px;font-size:22px;color:#151515;left:2429.5px;width:100px;text-align:right;">-</div>
<div class="t" style="top:827.3px;font-size:22px;color:#151515;left:2598.5px;width:100px;text-align:right;">-</div>
<div class="t" style="top:855.3px;font-size:22px;color:#151515;left:1753.5px;width:100px;text-align:right;">-</div>
<div class="t" style="top:855.3px;font-size:22px;color:#151515;left:1922.5px;width:100px;text-align:right;">-</div>
<div class="t" style="top:855.3px;font-size:22px;color:#151515;left:2091.5px;width:100px;text-align:right;">-</div>
<div class="t" style="top:855.3px;font-size:22px;color:#151515;left:2260.5px;width:100px;text-align:right;">-</div>
<div class="t" style="top:855.3px;font-size:22px;color:#151515;left:2429.5px;width:100px;text-align:right;">-</div>
<div class="t" style="top:855.3px;font-size:22px;color:#151515;left:2598.5px;width:100px;text-align:right;">-</div>
<div class="t" style="top:883.4px;font-size:22px;color:#151515;left:1753.5px;width:100px;text-align:right;">-</div>
<div class="t" style="top:883.4px;font-size:22px;color:#151515;left:1922.5px;width:100px;text-align:right;">-</div>
<div class="t" style="top:883.4px;font-size:22px;color:#151515;left:2091.5px;width:100px;text-align:right;">-</div>
<div class="t" style="top:883.4px;font-size:22px;color:#151515;left:2260.5px;width:100px;text-align:right;">-</div>
<div class="t" style="top:883.4px;font-size:22px;color:#151515;left:2429.5px;width:100px;text-align:right;">-</div>
<div class="t" style="top:883.4px;font-size:22px;color:#151515;left:2598.5px;width:100px;text-align:right;">-</div>
<div class="r" style="left:84.0px;top:907.6px;width:2723.0px;height:35.1px;background:#4cb1e6;"></div>
<div class="t" style="top:912.1px;font-size:27px;color:#ffffff;font-weight:700;left:90.0px;transform:scaleX(1.11);transform-origin:left top;-webkit-text-stroke:0.6px #fff;">Total</div>
<div class="t" style="top:914.9px;font-size:22px;color:#ffffff;font-weight:700;left:1199.0px;width:300px;text-align:right;transform:scaleX(1.125);transform-origin:right top;-webkit-text-stroke:0.45px #ffffff;">5,025,000</div>
<div class="t" style="top:914.9px;font-size:22px;color:#ffffff;font-weight:700;left:1575.0px;width:300px;text-align:right;transform:scaleX(1.125);transform-origin:right top;-webkit-text-stroke:0.45px #ffffff;">302,778</div>
<div class="t" style="top:914.9px;font-size:22px;color:#ffffff;font-weight:700;left:1744.0px;width:300px;text-align:right;transform:scaleX(1.125);transform-origin:right top;-webkit-text-stroke:0.45px #ffffff;">377,778</div>
<div class="t" style="top:914.9px;font-size:22px;color:#ffffff;font-weight:700;left:1913.0px;width:300px;text-align:right;transform:scaleX(1.125);transform-origin:right top;-webkit-text-stroke:0.45px #ffffff;">492,956</div>
<div class="t" style="top:914.9px;font-size:22px;color:#ffffff;font-weight:700;left:2082.0px;width:300px;text-align:right;transform:scaleX(1.125);transform-origin:right top;-webkit-text-stroke:0.45px #ffffff;">532,242</div>
<div class="t" style="top:914.9px;font-size:22px;color:#ffffff;font-weight:700;left:2251.0px;width:300px;text-align:right;transform:scaleX(1.125);transform-origin:right top;-webkit-text-stroke:0.45px #ffffff;">565,575</div>
<div class="t" style="top:914.9px;font-size:22px;color:#ffffff;font-weight:700;left:2420.0px;width:300px;text-align:right;transform:scaleX(1.125);transform-origin:right top;-webkit-text-stroke:0.45px #ffffff;">565,575</div>
<div class="t" style="top:914.9px;font-size:22px;color:#ffffff;font-weight:700;left:2589.0px;width:300px;text-align:right;transform:scaleX(1.125);transform-origin:right top;-webkit-text-stroke:0.45px #ffffff;">565,575</div>
<div class="t" style="top:1001.7px;font-size:40px;color:#1f1f1f;font-weight:700;left:40.5px;transform:scaleX(1.024);transform-origin:left top;-webkit-text-stroke:0.9px #1f1f1f;">Startup Costs Depreciation, $</div>
<div class="r" style="left:84.0px;top:1068.5px;width:2723.0px;height:27.5px;background:#4cb1e6;"></div>
<div class="t" style="top:1072.5px;font-size:21.5px;color:#ffffff;font-weight:700;left:88.5px;transform:scaleX(1.065);transform-origin:left top;-webkit-text-stroke:0.45px #fff;">Opening Net Book Value</div>
<div class="r" style="left:84.0px;top:1152.6px;width:2723.0px;height:27.5px;background:#4cb1e6;"></div>
<div class="t" style="top:1156.6px;font-size:21.5px;color:#ffffff;font-weight:700;left:88.5px;transform:scaleX(1.065);transform-origin:left top;-webkit-text-stroke:0.45px #fff;">Closing Net Book Value</div>
<div class="r" style="left:84.0px;top:1222.3px;width:2723.0px;height:27.6px;background:#4cb1e6;"></div>
<div class="t" style="top:1226.4px;font-size:21.5px;color:#ffffff;font-weight:700;left:88.5px;transform:scaleX(1.065);transform-origin:left top;-webkit-text-stroke:0.45px #fff;">Opening Net Book Value</div>
<div class="r" style="left:84.0px;top:1278.7px;width:2723.0px;height:27.4px;background:#4cb1e6;"></div>
<div class="t" style="top:1282.6px;font-size:21.5px;color:#ffffff;font-weight:700;left:88.5px;transform:scaleX(1.065);transform-origin:left top;-webkit-text-stroke:0.45px #fff;">Closing Net Book Value</div>
<div class="t" style="top:1099.7px;font-size:22px;color:#151515;letter-spacing:0.03px;left:106.7px;">Expenditure - Amortizable</div>
<div class="t" style="top:1127.8px;font-size:22px;color:#151515;letter-spacing:0.03px;left:106.7px;">Depreciation (Depreciation Period (Years) - 10)</div>
<div class="t" style="top:1253.9px;font-size:22px;color:#151515;letter-spacing:0.03px;left:106.7px;">Expenditure - Non-Amortizable</div>
<div class="t" style="top:1071.4px;font-size:22px;color:#ffffff;font-weight:700;left:1747.5px;width:100px;text-align:right;transform:scaleX(1.3);transform-origin:right top;">-</div>
<div class="t" style="top:1071.4px;font-size:22px;color:#ffffff;font-weight:700;left:1744.0px;width:300px;text-align:right;transform:scaleX(1.125);transform-origin:right top;-webkit-text-stroke:0.45px #ffffff;">300,255</div>
<div class="t" style="top:1071.4px;font-size:22px;color:#ffffff;font-weight:700;left:1913.0px;width:300px;text-align:right;transform:scaleX(1.125);transform-origin:right top;-webkit-text-stroke:0.45px #ffffff;">672,361</div>
<div class="t" style="top:1071.4px;font-size:22px;color:#ffffff;font-weight:700;left:2082.0px;width:300px;text-align:right;transform:scaleX(1.125);transform-origin:right top;-webkit-text-stroke:0.45px #ffffff;">1,155,538</div>
<div class="t" style="top:1071.4px;font-size:22px;color:#ffffff;font-weight:700;left:2251.0px;width:300px;text-align:right;transform:scaleX(1.125);transform-origin:right top;-webkit-text-stroke:0.45px #ffffff;">1,673,566</div>
<div class="t" style="top:1071.4px;font-size:22px;color:#ffffff;font-weight:700;left:2420.0px;width:300px;text-align:right;transform:scaleX(1.125);transform-origin:right top;-webkit-text-stroke:0.45px #ffffff;">2,220,213</div>
<div class="t" style="top:1071.4px;font-size:22px;color:#ffffff;font-weight:700;left:2589.0px;width:300px;text-align:right;transform:scaleX(1.125);transform-origin:right top;-webkit-text-stroke:0.45px #ffffff;">2,762,148</div>
<div class="t" style="top:1099.3px;font-size:22px;color:#151515;left:1584.5px;width:100px;text-align:right;">-</div>
<div class="t" style="top:1099.3px;font-size:22px;color:#151515;letter-spacing:-0.2px;left:1576.8px;width:300px;text-align:right;">302,778</div>
<div class="t" style="top:1099.3px;font-size:22px;color:#151515;letter-spacing:-0.2px;left:1745.8px;width:300px;text-align:right;">377,778</div>
<div class="t" style="top:1099.3px;font-size:22px;color:#151515;letter-spacing:-0.2px;left:1914.8px;width:300px;text-align:right;">492,956</div>
<div class="t" style="top:1099.3px;font-size:22px;color:#151515;letter-spacing:-0.2px;left:2083.8px;width:300px;text-align:right;">532,242</div>
<div class="t" style="top:1099.3px;font-size:22px;color:#151515;letter-spacing:-0.2px;left:2252.8px;width:300px;text-align:right;">565,575</div>
<div class="t" style="top:1099.3px;font-size:22px;color:#151515;letter-spacing:-0.2px;left:2421.8px;width:300px;text-align:right;">565,575</div>
<div class="t" style="top:1127.4px;font-size:22px;color:#151515;letter-spacing:-0.2px;left:1576.8px;width:300px;text-align:right;">2,523</div>
<div class="t" style="top:1127.4px;font-size:22px;color:#151515;letter-spacing:-0.2px;left:1745.8px;width:300px;text-align:right;">5,671</div>
<div class="t" style="top:1127.4px;font-size:22px;color:#151515;letter-spacing:-0.2px;left:1914.8px;width:300px;text-align:right;">9,779</div>
<div class="t" style="top:1127.4px;font-size:22px;color:#151515;letter-spacing:-0.2px;left:2083.8px;width:300px;text-align:right;">14,215</div>
<div class="t" style="top:1127.4px;font-size:22px;color:#151515;letter-spacing:-0.2px;left:2252.8px;width:300px;text-align:right;">18,928</div>
<div class="t" style="top:1127.4px;font-size:22px;color:#151515;letter-spacing:-0.2px;left:2421.8px;width:300px;text-align:right;">23,641</div>
<div class="t" style="top:1155.5px;font-size:22px;color:#ffffff;font-weight:700;left:1578.5px;width:100px;text-align:right;transform:scaleX(1.3);transform-origin:right top;">-</div>
<div class="t" style="top:1155.5px;font-size:22px;color:#ffffff;font-weight:700;left:1575.0px;width:300px;text-align:right;transform:scaleX(1.125);transform-origin:right top;-webkit-text-stroke:0.45px #ffffff;">300,255</div>
<div class="t" style="top:1155.5px;font-size:22px;color:#ffffff;font-weight:700;left:1744.0px;width:300px;text-align:right;transform:scaleX(1.125);transform-origin:right top;-webkit-text-stroke:0.45px #ffffff;">672,361</div>
<div class="t" style="top:1155.5px;font-size:22px;color:#ffffff;font-weight:700;left:1913.0px;width:300px;text-align:right;transform:scaleX(1.125);transform-origin:right top;-webkit-text-stroke:0.45px #ffffff;">1,155,538</div>
<div class="t" style="top:1155.5px;font-size:22px;color:#ffffff;font-weight:700;left:2082.0px;width:300px;text-align:right;transform:scaleX(1.125);transform-origin:right top;-webkit-text-stroke:0.45px #ffffff;">1,673,566</div>
<div class="t" style="top:1155.5px;font-size:22px;color:#ffffff;font-weight:700;left:2251.0px;width:300px;text-align:right;transform:scaleX(1.125);transform-origin:right top;-webkit-text-stroke:0.45px #ffffff;">2,220,213</div>
<div class="t" style="top:1155.5px;font-size:22px;color:#ffffff;font-weight:700;left:2420.0px;width:300px;text-align:right;transform:scaleX(1.125);transform-origin:right top;-webkit-text-stroke:0.45px #ffffff;">2,762,148</div>
<div class="t" style="top:1155.5px;font-size:22px;color:#ffffff;font-weight:700;left:2589.0px;width:300px;text-align:right;transform:scaleX(1.125);transform-origin:right top;-webkit-text-stroke:0.45px #ffffff;">3,299,369</div>
<div class="t" style="top:1225.3px;font-size:22px;color:#ffffff;font-weight:700;left:1747.5px;width:100px;text-align:right;transform:scaleX(1.3);transform-origin:right top;">-</div>
<div class="t" style="top:1253.5px;font-size:22px;color:#151515;left:1753.5px;width:100px;text-align:right;">-</div>
<div class="t" style="top:1281.5px;font-size:22px;color:#ffffff;font-weight:700;left:1747.5px;width:100px;text-align:right;transform:scaleX(1.3);transform-origin:right top;">-</div>
<div class="t" style="top:1225.3px;font-size:22px;color:#ffffff;font-weight:700;left:1916.5px;width:100px;text-align:right;transform:scaleX(1.3);transform-origin:right top;">-</div>
<div class="t" style="top:1253.5px;font-size:22px;color:#151515;left:1922.5px;width:100px;text-align:right;">-</div>
<div class="t" style="top:1281.5px;font-size:22px;color:#ffffff;font-weight:700;left:1916.5px;width:100px;text-align:right;transform:scaleX(1.3);transform-origin:right top;">-</div>
<div class="t" style="top:1225.3px;font-size:22px;color:#ffffff;font-weight:700;left:2085.5px;width:100px;text-align:right;transform:scaleX(1.3);transform-origin:right top;">-</div>
<div class="t" style="top:1253.5px;font-size:22px;color:#151515;left:2091.5px;width:100px;text-align:right;">-</div>
<div class="t" style="top:1281.5px;font-size:22px;color:#ffffff;font-weight:700;left:2085.5px;width:100px;text-align:right;transform:scaleX(1.3);transform-origin:right top;">-</div>
<div class="t" style="top:1225.3px;font-size:22px;color:#ffffff;font-weight:700;left:2254.5px;width:100px;text-align:right;transform:scaleX(1.3);transform-origin:right top;">-</div>
<div class="t" style="top:1253.5px;font-size:22px;color:#151515;left:2260.5px;width:100px;text-align:right;">-</div>
<div class="t" style="top:1281.5px;font-size:22px;color:#ffffff;font-weight:700;left:2254.5px;width:100px;text-align:right;transform:scaleX(1.3);transform-origin:right top;">-</div>
<div class="t" style="top:1225.3px;font-size:22px;color:#ffffff;font-weight:700;left:2423.5px;width:100px;text-align:right;transform:scaleX(1.3);transform-origin:right top;">-</div>
<div class="t" style="top:1253.5px;font-size:22px;color:#151515;left:2429.5px;width:100px;text-align:right;">-</div>
<div class="t" style="top:1281.5px;font-size:22px;color:#ffffff;font-weight:700;left:2423.5px;width:100px;text-align:right;transform:scaleX(1.3);transform-origin:right top;">-</div>
<div class="t" style="top:1225.3px;font-size:22px;color:#ffffff;font-weight:700;left:2592.5px;width:100px;text-align:right;transform:scaleX(1.3);transform-origin:right top;">-</div>
<div class="t" style="top:1253.5px;font-size:22px;color:#151515;left:2598.5px;width:100px;text-align:right;">-</div>
<div class="t" style="top:1281.5px;font-size:22px;color:#ffffff;font-weight:700;left:2592.5px;width:100px;text-align:right;transform:scaleX(1.3);transform-origin:right top;">-</div>
<div class="r" style="left:1720.0px;top:0.0px;width:1.2px;height:1365.0px;background:#9a9a9a;"></div>
<div class="r" style="left:0.0px;top:0.0px;width:2.5px;height:50.0px;background:#1e7a45;"></div>
</div>
<div class="r" style="left:2860.0px;top:278.0px;width:31.0px;height:1392.0px;background:#111111;"></div>
<div class="r" style="left:2864.0px;top:282.0px;width:25.0px;height:1386.0px;background:#161616;border-radius:12px"></div>
<svg class="r" style="left:2866.0px;top:284.0px" width="20" height="14" viewBox="0 0 20 14" fill="none"><path d="M3 12 L10 2.5 L17 12 Z" fill="#9a9a9a" stroke="#9a9a9a" stroke-width="2" stroke-linejoin="round"/></svg>
<div class="r" style="left:2870.0px;top:303.8px;width:12.0px;height:1311.2px;background:#9c9c9c;border-radius:6px"></div>
<svg class="r" style="left:2866.0px;top:1652.0px" width="20" height="14" viewBox="0 0 20 14" fill="none"><path d="M3 2 L10 11.5 L17 2 Z" fill="#9a9a9a" stroke="#9a9a9a" stroke-width="2" stroke-linejoin="round"/></svg>
<div class="r" style="left:11.0px;top:1670.0px;width:2880.0px;height:48.5px;background:#0a0a0a;"></div>
<div class="r" style="left:11.0px;top:1669.8px;width:2849.0px;height:1.2px;background:#3a3a3a;"></div>
<svg class="r" style="left:40.0px;top:1684.0px" width="16" height="18" viewBox="0 0 16 18" fill="none"><path d="M12 2 L4 9 L12 16" stroke="#8a8a8a" stroke-width="1.7"/></svg>
<svg class="r" style="left:91.0px;top:1684.0px" width="16" height="18" viewBox="0 0 16 18" fill="none"><path d="M4 2 L12 9 L4 16" stroke="#d8d8d8" stroke-width="1.7"/></svg>
<div class="t" style="top:1685.7px;font-size:20px;color:#ffffff;letter-spacing:0.2px;left:190.0px;">Contents</div>
<div class="r" style="left:299.2px;top:1676.5px;width:127.4px;height:35.0px;background:#fbe96b;border-radius:7px"></div>
<div class="t" style="top:1685.4px;font-size:20px;color:#141414;letter-spacing:0.1px;left:212.9px;width:300px;text-align:center;">Dashboard</div>
<div class="r" style="left:440.2px;top:1676.5px;width:105.2px;height:35.0px;background:#fbe96b;border-radius:7px"></div>
<div class="t" style="top:1685.4px;font-size:20px;color:#141414;letter-spacing:0.1px;left:342.8px;width:300px;text-align:center;">Revenue</div>
<div class="r" style="left:559.0px;top:1676.5px;width:78.7px;height:35.0px;background:#fbe96b;border-radius:7px"></div>
<div class="t" style="top:1685.4px;font-size:20px;color:#141414;letter-spacing:0.1px;left:448.4px;width:300px;text-align:center;">COGS</div>
<div class="r" style="left:651.3px;top:1676.5px;width:75.2px;height:35.0px;background:#fbe96b;border-radius:7px"></div>
<div class="t" style="top:1685.4px;font-size:20px;color:#141414;letter-spacing:0.1px;left:538.9px;width:300px;text-align:center;">OPEX</div>
<div class="r" style="left:740.2px;top:1676.5px;width:88.4px;height:35.0px;background:#fbe96b;border-radius:7px"></div>
<div class="t" style="top:1685.4px;font-size:20px;color:#141414;letter-spacing:0.1px;left:634.5px;width:300px;text-align:center;">Payroll</div>
<div class="r" style="left:942.2px;top:1676.5px;width:112.8px;height:35.0px;background:#fbe96b;border-radius:7px"></div>
<div class="t" style="top:1685.4px;font-size:20px;color:#141414;letter-spacing:0.1px;left:848.6px;width:300px;text-align:center;">CapTable</div>
<div class="r" style="left:1068.0px;top:1676.5px;width:90.0px;height:35.0px;background:#fbe96b;border-radius:7px"></div>
<div class="t" style="top:1685.4px;font-size:20px;color:#141414;letter-spacing:0.1px;left:963.0px;width:300px;text-align:center;">Capital</div>
<div class="r" style="left:1171.0px;top:1676.5px;width:42.0px;height:35.0px;background:#4eb4e8;border-radius:7px"></div>
<div class="t" style="top:1685.4px;font-size:20px;color:#141414;letter-spacing:0.1px;left:1042.0px;width:300px;text-align:center;">IS</div>
<div class="r" style="left:1226.3px;top:1676.5px;width:47.4px;height:35.0px;background:#4eb4e8;border-radius:7px"></div>
<div class="t" style="top:1685.4px;font-size:20px;color:#141414;letter-spacing:0.1px;left:1100.0px;width:300px;text-align:center;">CF</div>
<div class="r" style="left:1287.0px;top:1676.5px;width:47.6px;height:35.0px;background:#4eb4e8;border-radius:7px"></div>
<div class="t" style="top:1685.4px;font-size:20px;color:#141414;letter-spacing:0.1px;left:1160.8px;width:300px;text-align:center;">BS</div>
<div class="r" style="left:1348.0px;top:1676.5px;width:114.5px;height:35.0px;background:#4eb4e8;border-radius:7px"></div>
<div class="t" style="top:1685.4px;font-size:20px;color:#141414;letter-spacing:0.1px;left:1255.3px;width:300px;text-align:center;">Scenarios</div>
<div class="r" style="left:1476.3px;top:1676.5px;width:114.4px;height:35.0px;background:#4eb4e8;border-radius:7px"></div>
<div class="t" style="top:1685.4px;font-size:20px;color:#141414;letter-spacing:0.1px;left:1383.5px;width:300px;text-align:center;">Valuation</div>
<div class="r" style="left:1604.5px;top:1676.5px;width:112.8px;height:35.0px;background:#4eb4e8;border-radius:7px"></div>
<div class="t" style="top:1685.4px;font-size:20px;color:#141414;letter-spacing:0.1px;left:1511.0px;width:300px;text-align:center;">Summary</div>
<div class="r" style="left:1731.5px;top:1676.5px;width:46.7px;height:35.0px;background:#4eb4e8;border-radius:7px"></div>
<div class="t" style="top:1685.4px;font-size:20px;color:#141414;letter-spacing:0.1px;left:1604.9px;width:300px;text-align:center;">BE</div>
<div class="r" style="left:1792.0px;top:1676.5px;width:71.4px;height:35.0px;background:#4eb4e8;border-radius:7px"></div>
<div class="t" style="top:1685.4px;font-size:20px;color:#141414;letter-spacing:0.1px;left:1677.8px;width:300px;text-align:center;">ROIC</div>
<div class="r" style="left:1877.5px;top:1676.5px;width:83.8px;height:35.0px;background:#4eb4e8;border-radius:7px"></div>
<div class="t" style="top:1685.4px;font-size:20px;color:#141414;letter-spacing:0.1px;left:1769.5px;width:300px;text-align:center;">Charts</div>
<div class="r" style="left:1974.7px;top:1676.5px;width:63.6px;height:35.0px;background:#4eb4e8;border-radius:7px"></div>
<div class="t" style="top:1685.4px;font-size:20px;color:#141414;letter-spacing:0.1px;left:1856.5px;width:300px;text-align:center;">KPIs</div>
<div class="r" style="left:291.6px;top:1680.0px;width:1.2px;height:28.0px;background:#555555;"></div>
<div class="r" style="left:432.6px;top:1680.0px;width:1.2px;height:28.0px;background:#555555;"></div>
<div class="r" style="left:551.8px;top:1680.0px;width:1.2px;height:28.0px;background:#555555;"></div>
<div class="r" style="left:644.1px;top:1680.0px;width:1.2px;height:28.0px;background:#555555;"></div>
<div class="r" style="left:732.6px;top:1680.0px;width:1.2px;height:28.0px;background:#555555;"></div>
<div class="r" style="left:835.0px;top:1680.0px;width:1.2px;height:28.0px;background:#555555;"></div>
<div class="r" style="left:934.4px;top:1680.0px;width:1.2px;height:28.0px;background:#555555;"></div>
<div class="r" style="left:1061.4px;top:1680.0px;width:1.2px;height:28.0px;background:#555555;"></div>
<div class="r" style="left:1164.0px;top:1680.0px;width:1.2px;height:28.0px;background:#555555;"></div>
<div class="r" style="left:1218.8px;top:1680.0px;width:1.2px;height:28.0px;background:#555555;"></div>
<div class="r" style="left:1279.6px;top:1680.0px;width:1.2px;height:28.0px;background:#555555;"></div>
<div class="r" style="left:1340.4px;top:1680.0px;width:1.2px;height:28.0px;background:#555555;"></div>
<div class="r" style="left:1468.4px;top:1680.0px;width:1.2px;height:28.0px;background:#555555;"></div>
<div class="r" style="left:1597.0px;top:1680.0px;width:1.2px;height:28.0px;background:#555555;"></div>
<div class="r" style="left:1723.6px;top:1680.0px;width:1.2px;height:28.0px;background:#555555;"></div>
<div class="r" style="left:1784.4px;top:1680.0px;width:1.2px;height:28.0px;background:#555555;"></div>
<div class="r" style="left:1869.7px;top:1680.0px;width:1.2px;height:28.0px;background:#555555;"></div>
<div class="r" style="left:1967.8px;top:1680.0px;width:1.2px;height:28.0px;background:#555555;"></div>
<div class="r" style="left:2045.3px;top:1680.0px;width:1.2px;height:28.0px;background:#555555;"></div>
<div class="r" style="left:2052.0px;top:1676.5px;width:19.8px;height:35.0px;background:#4eb4e8;border-radius:7px 0 0 7px"></div>
<div class="r" style="left:2052px;top:1676px;width:19.8px;height:36px;overflow:hidden"><div class="t" style="left:9px;top:9.4px;font-size:20px;color:#141414">S</div></div>
<div class="r" style="left:841.4px;top:1670.0px;width:87.7px;height:42.5px;background:#f7f7f7;border-radius:0 0 8px 8px"></div>
<div class="t" style="top:1684.1px;font-size:20px;color:#1a1a1a;letter-spacing:0.1px;left:785.2px;width:200px;text-align:center;">CAPEX</div>
<div class="r" style="left:854.0px;top:1705.5px;width:62.0px;height:2.5px;background:#1e7a45;"></div>
<div class="r" style="left:2087.0px;top:1690.5px;width:4.5px;height:4.5px;background:#e0e0e0;border-radius:50%"></div>
<div class="r" style="left:2093.2px;top:1690.5px;width:4.5px;height:4.5px;background:#e0e0e0;border-radius:50%"></div>
<div class="r" style="left:2099.4px;top:1690.5px;width:4.5px;height:4.5px;background:#e0e0e0;border-radius:50%"></div>
<div class="r" style="left:2134.7px;top:1692.0px;width:17.1px;height:1.8px;background:#e0e0e0;"></div>
<div class="r" style="left:2142.3px;top:1684.0px;width:1.8px;height:18.0px;background:#e0e0e0;"></div>
<div class="r" style="left:2189.5px;top:1686.0px;width:4.0px;height:4.0px;background:#e0e0e0;border-radius:50%"></div>
<div class="r" style="left:2189.5px;top:1692.5px;width:4.0px;height:4.0px;background:#e0e0e0;border-radius:50%"></div>
<div class="r" style="left:2189.5px;top:1699.0px;width:4.0px;height:4.0px;background:#e0e0e0;border-radius:50%"></div>
<div class="r" style="left:2216.7px;top:1680.6px;width:642.3px;height:25.1px;background:#161616;border-radius:12px"></div>
<svg class="r" style="left:2221.0px;top:1685.0px" width="15" height="16" viewBox="0 0 15 16" fill="none"><path d="M12 2 L3 8 L12 14 Z" fill="#9a9a9a" stroke="#9a9a9a" stroke-width="1.5" stroke-linejoin="round"/></svg>
<div class="r" style="left:2242.0px;top:1687.0px;width:55.0px;height:12.5px;background:#9c9c9c;border-radius:6px"></div>
<svg class="r" style="left:2840.0px;top:1685.0px" width="15" height="16" viewBox="0 0 15 16" fill="none"><path d="M3 2 L12 8 L3 14 Z" fill="#9a9a9a" stroke="#9a9a9a" stroke-width="1.5" stroke-linejoin="round"/></svg>
<div class="r" style="left:11.0px;top:1718.5px;width:2880.0px;height:32.5px;background:#131313;"></div>
<div class="r" style="left:11.0px;top:1718.0px;width:2880.0px;height:1.2px;background:#383838;"></div>
<div class="t" style="top:1727.9px;font-size:14.8px;color:#e6e6e6;left:27.3px;">Ready</div>
<svg class="r" style="left:98.0px;top:1725.0px" width="24" height="22" viewBox="0 0 24 22" fill="none"><rect x="1.2" y="1.2" width="20.6" height="19" stroke="#e6e6e6" stroke-width="1.9"/><path d="M1 5.2 H22" stroke="#e6e6e6" stroke-width="1.7"/><path d="M3.5 8.8 H8.5 M3.5 12.3 H8 M3.5 15.8 H7.5" stroke="#e6e6e6" stroke-width="1.6"/><circle cx="15" cy="14.5" r="5.6" fill="#131313" stroke="#e6e6e6" stroke-width="1.9"/><circle cx="15" cy="14.5" r="2.4" fill="#e6e6e6"/></svg>
<svg class="r" style="left:145.0px;top:1723.0px" width="24" height="25" viewBox="0 0 24 25" fill="none"><circle cx="10" cy="3.2" r="2.2" stroke="#eaeaea" stroke-width="1.8"/><path d="M1.5 7.5 Q3 6 5 7 L8.5 8.5 H11.5 L15 7 Q17 6 18.5 7.5 L13 11 L13.5 15 L15.5 21.5 M7 11 L6.5 15 L4.5 21.5 Q5.5 23 7 22 L9.5 17.5" stroke="#eaeaea" stroke-width="1.8" stroke-linejoin="round" stroke-linecap="round"/><path d="M13 16 L21.5 24 M21.5 16 L13 24" stroke="#eaeaea" stroke-width="1.6"/></svg>
<div class="t" style="top:1727.1px;font-size:15.7px;color:#ffffff;font-weight:700;left:173.4px;">Accessibility: Investigate</div>
<div class="r" style="left:2444.5px;top:1718.7px;width:59.9px;height:31.0px;background:#2a2a2a;"></div>
<svg class="r" style="left:2463.0px;top:1724.0px" width="22" height="20" viewBox="0 0 22 20" fill="none"><rect x="1" y="1" width="20" height="18" stroke="#e6e6e6" stroke-width="1.6"/><path d="M7.7 1 V19 M14.3 1 V19 M1 7 H21 M1 13 H21" stroke="#e6e6e6" stroke-width="1.5"/></svg>
<svg class="r" style="left:2523.0px;top:1724.0px" width="23" height="21" viewBox="0 0 23 21" fill="none"><rect x="1" y="1" width="21" height="19" stroke="#e6e6e6" stroke-width="1.6"/><rect x="4.5" y="4" width="14" height="13" stroke="#e6e6e6" stroke-width="1.4"/><path d="M7 8 H16 M7 11 H16 M7 14 H16" stroke="#e6e6e6" stroke-width="1.2"/></svg>
<svg class="r" style="left:2583.0px;top:1724.0px" width="23" height="21" viewBox="0 0 23 21" fill="none"><rect x="1" y="1" width="21" height="19" stroke="#e6e6e6" stroke-width="1.6"/><path d="M8 1 V12 H15 V1" stroke="#e6e6e6" stroke-width="1.6"/></svg>
<div class="r" style="left:2632.0px;top:1734.0px;width:13.0px;height:1.5px;background:#d0d0d0;"></div>
<div class="r" style="left:2652.0px;top:1734.3px;width:148.5px;height:1.1px;background:#9a9a9a;"></div>
<div class="r" style="left:2726.0px;top:1729.0px;width:1.2px;height:12.0px;background:#9a9a9a;"></div>
<div class="r" style="left:2731.8px;top:1726.0px;width:9.2px;height:16.6px;background:#b8b8b8;border-radius:1px"></div>
<div class="r" style="left:2808.0px;top:1734.0px;width:13.0px;height:1.5px;background:#d0d0d0;"></div>
<div class="r" style="left:2813.7px;top:1728.0px;width:1.6px;height:13.5px;background:#d0d0d0;"></div>
<div class="t" style="top:1728.2px;font-size:15.5px;color:#e6e6e6;left:2839.4px;">140%</div>
</body></html>
